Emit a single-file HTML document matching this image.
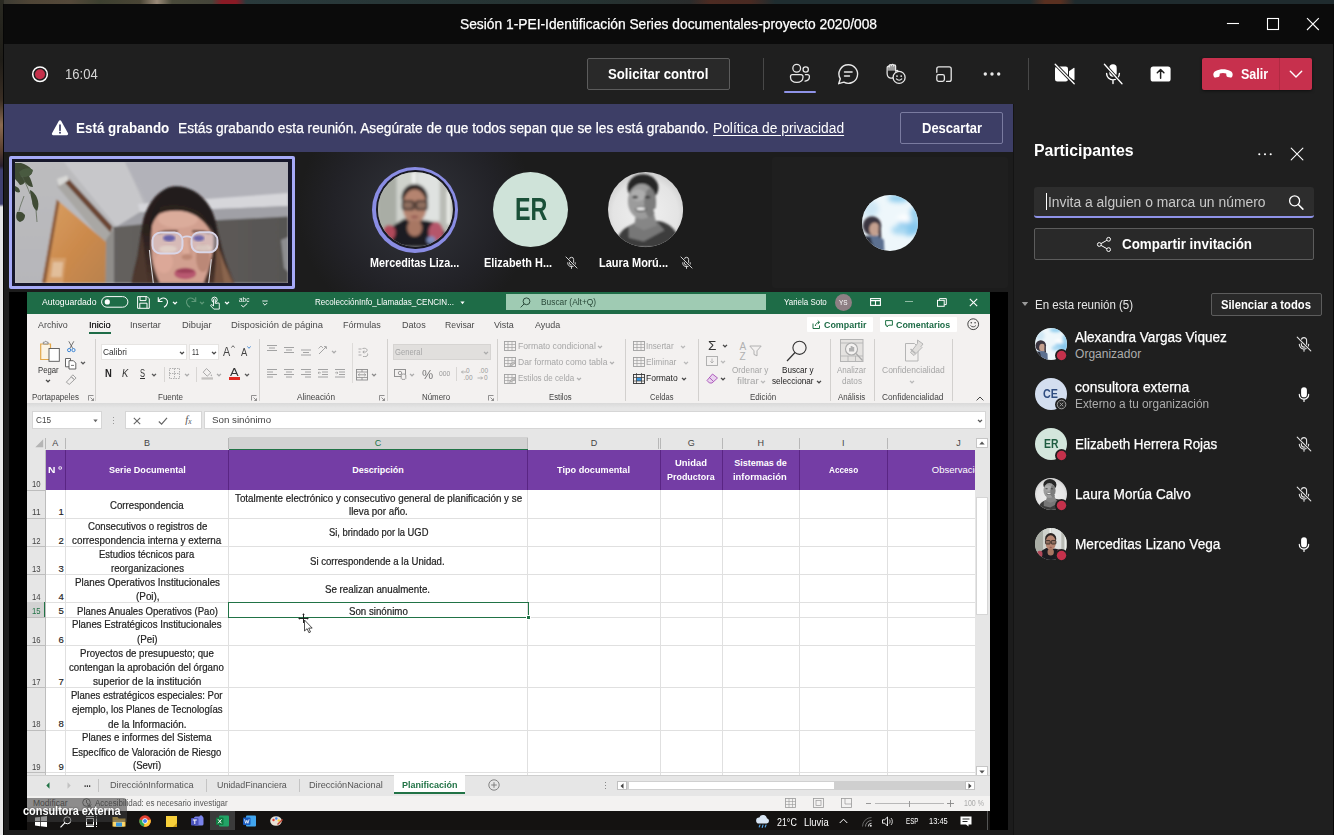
<!DOCTYPE html><html lang="es"><head><meta charset="utf-8"><title>Sesión 1-PEI</title>
<style>html,body{margin:0;padding:0;background:#1f1f1f;}body{width:1334px;height:835px;position:relative;overflow:hidden;font-family:"Liberation Sans",Arial,sans-serif;-webkit-font-smoothing:antialiased;}div,svg{box-sizing:content-box;}svg{overflow:visible;display:block;}</style></head><body>
<div style="position:absolute;left:0px;top:0px;width:1334px;height:5px;background:linear-gradient(90deg,#3a3a33 0,#4f4536 30px,#55493a 70px,#3d4030 100px,#4a4535 140px,#9a8a78 157px,#4a4a3a 172px,#45453a 212px,#8a1a25 222px,#8a1a25 236px,#2a3a3c 246px,#253231 600px,#2a2c2c 690px,#4d2b22 710px,#4a2a22 750px,#1f2d30 775px,#1f2d30 1030px,#5a3020 1045px,#5a3020 1060px,#1f2b2e 1075px,#1f2b2e 100%);"></div>
<div style="position:absolute;left:0px;top:0px;width:4px;height:835px;background:linear-gradient(180deg,#2a2a22 0,#1f1d18 60px,#3a2e24 100px,#8a6a50 125px,#5a4030 150px,#2a2030 166px,#3f4070 170px,#3f4070 204px,#e6e6e6 207px,#e9e9e9 100%);"></div>
<div style="position:absolute;left:3px;top:4px;width:1331px;height:831px;background:#1f1f1f;"></div>
<div style="position:absolute;left:3px;top:4px;width:1331px;height:40px;background:#0b0b0b;"></div>
<div style="position:absolute;top:15.00px;height:18px;line-height:18px;font-size:14px;color:#ffffff;white-space:nowrap;left:460.00px;transform-origin:0 50%;transform:scaleX(0.9850);-webkit-text-stroke:.25px #fff;">Sesión 1-PEI-Identificación Series documentales-proyecto 2020/008</div>
<svg style="position:absolute;left:1223px;top:14px;" width="100" height="20" viewBox="0 0 100 20"><path d="M3.900 9.500h12.100" stroke="#fff" stroke-width="1.100" fill="none"/><rect x="44.500" y="4.500" width="11" height="11" stroke="#fff" stroke-width="1.100" fill="none"/><path d="M84 4.200l11.800 11.800M95.800 4.200L84 16" stroke="#fff" stroke-width="1.100" fill="none"/></svg>
<div style="position:absolute;left:3px;top:44px;width:1331px;height:60px;background:#1f1f1f;"></div>
<svg style="position:absolute;left:30px;top:65px;" width="20" height="20" viewBox="0 0 20 20"><circle cx="10" cy="9.2" r="7.3" fill="none" stroke="#fff" stroke-width="1.5"/><circle cx="10" cy="9.2" r="5" fill="#c4314b"/></svg>
<div style="position:absolute;top:65.00px;height:18px;line-height:18px;font-size:14px;color:#d6d6d6;white-space:nowrap;left:64.50px;transform-origin:0 50%;transform:scaleX(0.9334);">16:04</div>
<div style="position:absolute;left:587px;top:58px;width:143px;height:32px;background:#292929;box-sizing:border-box;border:1px solid #5c5c5c;border-radius:2px;"></div>
<div style="position:absolute;top:65.00px;height:18px;line-height:18px;font-size:14px;color:#fff;white-space:nowrap;font-weight:700;left:608.40px;transform-origin:0 50%;transform:scaleX(0.9411);">Solicitar control</div>
<div style="position:absolute;left:763px;top:58px;width:1px;height:32px;background:#484848;"></div>
<div style="position:absolute;left:1028px;top:58px;width:1px;height:32px;background:#484848;"></div>
<div style="position:absolute;left:784px;top:90.5px;width:32px;height:2.5px;background:#8f93e8;border-radius:1px;"></div>
<svg style="position:absolute;left:788px;top:62px;" width="24" height="24" viewBox="788 62 24 24"><circle cx="796.700" cy="68.300" r="3.850" fill="none" stroke="#e8e8e8" stroke-width="1.300"/><circle cx="805.700" cy="69.500" r="2.650" fill="none" stroke="#e8e8e8" stroke-width="1.300"/><path d="M792.400 74.700h8.700a1.900 1.900 0 0 1 1.900 1.900v.6c0 3-2.500 5.100-6.250 5.100s-6.250-2.100-6.250-5.100v-.6a1.900 1.900 0 0 1 1.900-1.900z" fill="none" stroke="#e8e8e8" stroke-width="1.300"/><path d="M805.400 74.700h2.100a1.900 1.900 0 0 1 1.900 1.900v.2c0 2.300-1.700 4.100-4.400 4.300" fill="none" stroke="#e8e8e8" stroke-width="1.300" stroke-linecap="round"/></svg>
<svg style="position:absolute;left:836px;top:62px;" width="24" height="24" viewBox="0 0 24 24"><path d="M12.400 2.700a9.300 9.300 0 1 1-4.500 17.500l-5.200 1.500 1.600-4.900a9.300 9.300 0 0 1 8.100-14.100z" fill="none" stroke="#e8e8e8" stroke-width="1.400" stroke-linejoin="round"/><path d="M8.500 10h7.600M8.500 14h5" stroke="#e8e8e8" stroke-width="1.400" stroke-linecap="round"/></svg>
<svg style="position:absolute;left:884px;top:62px;" width="24" height="24" viewBox="884 62 24 24"><path d="M888 65.300h7.200v5.400h-7.200z" fill="#e8e8e8" fill-opacity=".62"/><path d="M887.200 67.400a1.100 1.100 0 0 1 2.100-.4v-1.300a1.050 1.050 0 0 1 2.100 0v-.4a1.050 1.050 0 0 1 2.100 0v.7a1.050 1.050 0 0 1 2.100 0v5.200l1.100-.7c.9-.4 1.700.6 1.100 1.400l-4.300 5.300c-1.600 1.500-4.200 1.300-5.500-.5-.7-1-.9-2.300-.9-3.800z" fill="none" stroke="#e8e8e8" stroke-width="1.250" stroke-linejoin="round"/><circle cx="899.100" cy="77.400" r="6" fill="#1f1f1f" stroke="#e8e8e8" stroke-width="1.300"/><circle cx="897" cy="76.100" r=".9" fill="#e8e8e8"/><circle cx="901.200" cy="76.100" r=".9" fill="#e8e8e8"/><path d="M896.400 78.900c1.300 1.700 4.100 1.700 5.400 0" fill="none" stroke="#e8e8e8" stroke-width="1.100" stroke-linecap="round"/></svg>
<svg style="position:absolute;left:932px;top:62px;" width="24" height="24" viewBox="932 62 24 24"><path d="M936.800 72.300v-3.500a2 2 0 0 1 2-2h10.400a2 2 0 0 1 2 2v10.600a2 2 0 0 1-2 2h-2.600" fill="none" stroke="#e8e8e8" stroke-width="1.300" stroke-linecap="round"/><rect x="936.800" y="74.700" width="7.600" height="6.700" rx="1.800" fill="none" stroke="#e8e8e8" stroke-width="1.300"/></svg>
<svg style="position:absolute;left:980px;top:62px;" width="24" height="24" viewBox="0 0 24 24"><circle cx="5.300" cy="12" r="1.700" fill="#e8e8e8"/><circle cx="12" cy="12" r="1.700" fill="#e8e8e8"/><circle cx="18.700" cy="12" r="1.700" fill="#e8e8e8"/></svg>
<svg style="position:absolute;left:1052px;top:62px;" width="24" height="24" viewBox="0 0 24 24"><path d="M3 6.800a2.300 2.300 0 0 1 2.300-2.300h8.400a2.300 2.300 0 0 1 2.300 2.300v10.400a2.300 2.300 0 0 1-2.300 2.300h-8.400a2.300 2.300 0 0 1-2.300-2.300z" fill="#fff"/><path d="M17 9.200l4.600-3.200a.6.600 0 0 1 .9.500v11a.6.600 0 0 1-.9.500l-4.600-3.200z" fill="#fff"/><path d="M3.200 2.200l19 19.600" stroke="#1f1f1f" stroke-width="3.200"/><path d="M3.200 2.200l19 19.600" stroke="#fff" stroke-width="1.300" stroke-linecap="round"/></svg>
<svg style="position:absolute;left:1100.8px;top:62px;" width="24" height="24" viewBox="0 0 24 24"><rect x="8.300" y="2.200" width="7.400" height="12.600" rx="3.700" fill="#fff"/><path d="M5.600 11.500a6.400 6.400 0 0 0 12.800 0M12 18v3.600" fill="none" stroke="#fff" stroke-width="1.400" stroke-linecap="round"/><path d="M3.400 2.200l17.600 19.600" stroke="#1f1f1f" stroke-width="3.200"/><path d="M3.400 2.200l17.600 19.600" stroke="#fff" stroke-width="1.300" stroke-linecap="round"/></svg>
<svg style="position:absolute;left:1148px;top:62px;" width="24" height="24" viewBox="0 0 24 24"><rect x="2.600" y="4.600" width="20" height="15" rx="2.600" fill="#fff"/><path d="M12.600 16.300v-8M9.300 10.800l3.300-3.300 3.300 3.300" fill="none" stroke="#1f1f1f" stroke-width="1.500" stroke-linecap="round" stroke-linejoin="round"/></svg>
<div style="position:absolute;left:1202px;top:58px;width:110px;height:32px;background:#c7304d;border-radius:2px;box-shadow:0 1px 3px rgba(0,0,0,.5);"></div>
<div style="position:absolute;left:1279px;top:58px;width:1px;height:32px;background:#b02a42;"></div>
<svg style="position:absolute;left:1212px;top:66px;" width="22" height="16" viewBox="0 0 22 16"><path d="M1.500 9.700c-.6-2 .2-3.700 2.200-4.700 4.500-2.200 10.100-2.200 14.600 0 2 1 2.800 2.700 2.200 4.700l-.3.900c-.2.800-1 1.200-1.800 1l-2.800-.7c-.7-.2-1.100-.7-1.200-1.400l-.2-1.900c-2.100-.8-4.300-.8-6.400 0l-.2 1.900c-.1.700-.5 1.200-1.200 1.400l-2.800.7c-.8.200-1.600-.2-1.800-1z" fill="#fff"/></svg>
<div style="position:absolute;top:65.00px;height:18px;line-height:18px;font-size:14px;color:#fff;white-space:nowrap;font-weight:700;left:1240.80px;transform-origin:0 50%;transform:scaleX(0.8962);">Salir</div>
<svg style="position:absolute;left:1288px;top:68px;" width="16" height="12" viewBox="0 0 16 12"><path d="M2.300 3.300l5.700 5.600 5.700-5.600" fill="none" stroke="#fff" stroke-width="1.400" stroke-linecap="round" stroke-linejoin="round"/></svg>
<div style="position:absolute;left:3px;top:104px;width:1010px;height:48px;background:#3d3e66;"></div>
<svg style="position:absolute;left:51px;top:119px;" width="18" height="17" viewBox="0 0 18 17"><path d="M9 1.200c.5 0 .9.300 1.200.7l6.800 12.300c.5.900-.2 2-1.200 2h-13.600c-1 0-1.700-1.100-1.200-2l6.800-12.300c.300-.400.700-.700 1.200-.700z" fill="#fff"/><path d="M9 6v5.300" stroke="#3d3e66" stroke-width="1.700" stroke-linecap="round"/><circle cx="9" cy="13.700" r="1" fill="#3d3e66"/></svg>
<div style="position:absolute;top:119.00px;height:18px;line-height:18px;font-size:14px;color:#fff;white-space:nowrap;font-weight:700;left:76.30px;transform-origin:0 50%;transform:scaleX(0.9594);">Está grabando</div>
<div style="position:absolute;top:119.00px;height:18px;line-height:18px;font-size:14px;color:#fff;white-space:nowrap;left:178.40px;transform-origin:0 50%;transform:scaleX(0.9794);-webkit-text-stroke:.25px #fff;">Estás grabando esta reunión. Asegúrate de que todos sepan que se les está grabando.</div>
<div style="position:absolute;top:119.00px;height:18px;line-height:18px;font-size:14px;color:#fff;white-space:nowrap;left:713.40px;transform-origin:0 50%;transform:scaleX(0.9851);text-decoration:underline;text-underline-offset:2px;">Política de privacidad</div>
<div style="position:absolute;left:900px;top:112px;width:103.3px;height:32px;background:#3d3e66;box-sizing:border-box;border:1px solid #7a7ba0;border-radius:2px;"></div>
<div style="position:absolute;top:119.00px;height:18px;line-height:18px;font-size:14px;color:#fff;white-space:nowrap;font-weight:700;left:921.50px;transform-origin:0 50%;transform:scaleX(0.9288);">Descartar</div>
<div style="position:absolute;left:3px;top:152px;width:1010px;height:683px;background:#1c1c1c;"></div>
<div style="position:absolute;left:296px;top:152px;width:240px;height:140px;background:radial-gradient(circle 118px at 120px 58px, #2e2f36 0%, #2a2b31 35%, #222227 70%, #1c1c1c 100%);"></div>
<div style="position:absolute;left:9px;top:156px;width:285.5px;height:133px;background:#a6aaf7;border-radius:2px;"></div>
<div style="position:absolute;left:12px;top:159px;width:279.5px;height:127px;background:#16172b;"></div>
<svg style="position:absolute;left:15px;top:162px;" width="273" height="121" viewBox="15 162 273 121"><defs><filter id="wb1" x="-5%" y="-5%" width="110%" height="110%"><feGaussianBlur stdDeviation="0.9"/></filter><filter id="wb2" x="-10%" y="-10%" width="120%" height="120%"><feGaussianBlur stdDeviation="1.8"/></filter><filter id="wb3" x="-10%" y="-10%" width="120%" height="120%"><feGaussianBlur stdDeviation="0.5"/></filter><linearGradient id="wgw" x1="0" y1="0" x2="0" y2="1"><stop offset="0" stop-color="#bcbcbe"/><stop offset="1" stop-color="#b6b6ba"/></linearGradient><linearGradient id="wgc" x1="0" y1="0" x2="1" y2="0"><stop offset="0" stop-color="#c8c8ca"/><stop offset=".5" stop-color="#b8b8bd"/><stop offset="1" stop-color="#aaaab2"/></linearGradient><linearGradient id="wgo" x1="0" y1="0" x2="1" y2="1"><stop offset="0" stop-color="#d9a064"/><stop offset=".55" stop-color="#cc8a4c"/><stop offset="1" stop-color="#b9824f"/></linearGradient><linearGradient id="wgd" x1="0" y1="0" x2="1" y2="0"><stop offset="0" stop-color="#64615e"/><stop offset="1" stop-color="#575553"/></linearGradient><linearGradient id="wgh" x1="0" y1="0" x2="0" y2="1"><stop offset="0" stop-color="#231a1a"/><stop offset=".55" stop-color="#2e2220"/><stop offset="1" stop-color="#4a342b"/></linearGradient><clipPath id="wclip"><rect x="15" y="162" width="273" height="121"/></clipPath></defs><g clip-path="url(#wclip)"><rect x="15" y="162" width="273" height="121" fill="url(#wgc)"/><g filter="url(#wb1)"><path d="M15 162H64L116 226V283H15Z" fill="url(#wgw)"/><path d="M64 162H125L152 222L116 226Z" fill="#c7c7ca"/><path d="M125 162H288V196L148 206Z" fill="#b2b2b9"/><path d="M138 204L288 193V206L140 212Z" fill="#d6d6da"/><path d="M140 212L288 206V217L150 224L116 227Z" fill="#a0a0a6"/><path d="M113 227L150 223.500L288 216.500V283H113Z" fill="url(#wgd)"/><path d="M281 240L288 237V272L284 268Z" fill="#8d8d90"/><path d="M57 186L63 180L112 230L107 246Z" fill="#a9a7a4"/><path d="M63 180.500L68 178L112.500 226.500L110.500 232.500Z" fill="#6b4531"/><path d="M57 179L67 175.500L69 180L59 186Z" fill="#d8d8d6"/><path d="M106 240L114 228V283H105Z" fill="#8f8d8a"/><path d="M56.700 199.500L106 242L105.500 283H42Z" fill="url(#wgo)"/><path d="M56.700 199.500L59.500 202L45.500 283H42Z" fill="#8c5d3c"/><path d="M53 262H63L61.500 277H51Z" fill="#efe4d6" opacity=".85"/><path d="M47 283L51 258L66 258L63 283Z" fill="#dcae80" opacity=".6"/></g><g filter="url(#wb3)" fill="#3f4b36"><path d="M15 163h6c4 1 8 3 11 7 1 3-1 5-3 6 2 3 3 7 4 11-3 0-6-2-8-5-1 2-3 3-5 3-2-3-4-5-5-6z"/><path d="M19 172c4-4 10-5 14-2-1 5-6 8-12 7z" fill="#4a5a40"/><path d="M15 186c3 1 5 3 5 6-2 1-4 0-5-1z"/><path d="M30 190c4 2 7 6 8 11 1 4 0 8-1 10-3-2-5-6-5-10-1-4-2-8-2-11z"/><path d="M17 212c3-1 6 0 8 3 0 4-2 6-5 7-3-1-5-4-3-10z"/><path d="M22 176c3 6 6 12 8 18M24 196c-2 6-4 10-5 15M36 210l1 12" fill="none" stroke="#55624c" stroke-width=".7"/></g><g filter="url(#wb1)"><path d="M131.500 283C134 270 137 260 138 254C139.500 244 140.500 236 142 227.500C143 220 144 216 146 212C149 204 154 197 160.500 192C165 188.500 170 186.200 175 186.200C182 186 188 188 193.500 190.800C200 194.500 205.500 200 209.300 206.600C212.500 212 214.800 218 216 223.700C217.500 230 218.500 236 220 241C222 250 224.500 259 227.800 267C229.800 272.500 232 278 234.400 283Z" fill="url(#wgh)"/><path d="M216 236C219 250 223 262 227.800 270C230 275 232 279 234.400 283H214C216 266 216.500 250 216 236Z" fill="#74533f"/><path d="M220 250C223 262 228 274 232 283H224C222 272 221 262 220 250Z" fill="#8a654e"/><path d="M142 232C140 250 137 268 131.500 283H148C146 266 144 250 142 232Z" fill="#4e372e"/><path d="M158 270L206 270L204 283H160Z" fill="#b98573"/><path d="M152 226C153 216 158 210 166 208C176 205.500 190 206 200 211C208 215 213 224 213.300 236C213.500 246 212.500 256 210 264C208 272 205 279 203 283H160C157 277 153.500 268 152 258C150.800 247 151 236 152 226Z" fill="#d2a090"/><ellipse cx="178" cy="219" rx="20" ry="9" fill="#dbac9b"/><ellipse cx="164" cy="262" rx="9" ry="11" fill="#dca898"/><ellipse cx="203" cy="258" rx="7" ry="14" fill="#bb8877"/><ellipse cx="186" cy="246" rx="5" ry="9" fill="#dbaa99"/><path d="M150 232C149 220 152 208 160 199C168 191 182 189 194 193C206 198 214 210 216 226C216.500 230 216 234 214.500 238C212 228 207 219 199 214.500C190 210 176 208.500 166 210C158 212 153 220 150 232Z" fill="#231a1a"/><path d="M160 207C170 203 186 204 198 211C206 216 211 226 213 236C207 222 196 213 182 211C172 210 165 211 158 214Z" fill="#2b201e"/><path d="M158 232.500C164 230 171 229.500 178 230.500V232.500C171 232 164 232.500 158 234.500Z" fill="#5e3f34"/><path d="M192 230.500C198 229.500 204 230 210 232.500V234.500C204 232.500 198 232 192 232.500Z" fill="#5e3f34"/><ellipse cx="187" cy="257" rx="5.500" ry="3" fill="#bd8876"/><path d="M189 240C190 247 191 252 191.500 256" fill="none" stroke="#c39282" stroke-width="1.500"/><ellipse cx="185.200" cy="273.500" rx="11" ry="5.800" fill="#b8586f"/><ellipse cx="185.200" cy="270.800" rx="9.500" ry="2.300" fill="#9c4059"/></g><g filter="url(#wb3)"><rect x="152.500" y="232.500" width="30" height="21" rx="8" fill="#dcd9e6" fill-opacity=".45" stroke="#d9d6e8" stroke-width="2"/><rect x="191.500" y="232.300" width="26" height="20" rx="8" fill="#dcd9e6" fill-opacity=".45" stroke="#d9d6e8" stroke-width="2"/><ellipse cx="168" cy="249" rx="9" ry="3.500" fill="#e8e2d6" fill-opacity=".55" filter="url(#wb1)"/><ellipse cx="204" cy="248" rx="8" ry="3.200" fill="#e8e2d6" fill-opacity=".5" filter="url(#wb1)"/><path d="M182.500 237.500c3-1.500 6-1.500 9 0" fill="none" stroke="#d9d6e8" stroke-width="1.500"/><ellipse cx="169.200" cy="238.200" rx="6" ry="3.300" fill="#4a4aa8" fill-opacity=".8" filter="url(#wb1)"/><ellipse cx="198.800" cy="238.200" rx="5.500" ry="3" fill="#4a4aa8" fill-opacity=".75" filter="url(#wb1)"/><path d="M149.400 250C150.500 262 152.300 274 153.300 283" fill="none" stroke="#d4d4d8" stroke-width="1.100"/><path d="M211.300 259.300C210.500 268 209.500 276 208.700 283" fill="none" stroke="#d4d4d8" stroke-width="1.100"/></g></g></svg>
<div style="position:absolute;left:372.4px;top:166.6px;width:86px;height:86px;background:#8a8de4;border-radius:50%;"></div>
<div style="position:absolute;left:376.2px;top:170.4px;width:78.4px;height:78.4px;background:#1b1b24;border-radius:50%;"></div>
<svg style="position:absolute;left:378.0px;top:172.2px;" width="74.8" height="74.8" viewBox="0 0 74.8 74.8"><defs><clipPath id="smc"><circle cx="37.4" cy="37.4" r="37.4"/></clipPath><filter id="smb" x="-30%" y="-30%" width="160%" height="160%"><feGaussianBlur stdDeviation="1.50"/></filter></defs><g clip-path="url(#smc)"><rect width="74.8" height="74.8" fill="#c4c7c1"/><g filter="url(#smb)"><rect x="0" y="0" width="18.70" height="74.8" fill="#a9ada5"/><rect x="18.70" y="0" width="14.96" height="74.8" fill="#cfd2cc"/><rect x="33.66" y="0" width="4.49" height="44.88" fill="#eef0ee"/><rect x="39.27" y="0" width="23.19" height="48.62" fill="#dfe2e0"/><rect x="61.71" y="0" width="14.96" height="74.8" fill="#b9bcb5"/><rect x="68.82" y="18.70" width="3.74" height="33.66" fill="#eceeea"/><path d="M4.49 74.8C5.61 57.97 16.83 52.36 26.18 46.75L48.62 48.62C59.84 50.49 69.19 56.10 71.06 74.8Z" fill="#1d1c22"/><ellipse cx="11.22" cy="60.59" rx="6.36" ry="7.48" fill="#b0485a"/><ellipse cx="57.97" cy="60.59" rx="7.48" ry="10.47" fill="#b5566a"/><ellipse cx="53.11" cy="68.07" rx="4.49" ry="3.74" fill="#7f8ec0"/><ellipse cx="36.65" cy="25.43" rx="13.09" ry="13.46" fill="#2a2422"/><ellipse cx="36.65" cy="34.41" rx="11.97" ry="17.20" fill="#b58470"/><ellipse cx="36.65" cy="56.10" rx="7.48" ry="8.23" fill="#a87764"/><rect x="24.68" y="29.17" width="10.85" height="8.23" rx="1.87" fill="#8f6e5e" stroke="#2e2622" stroke-width="1.87"/><rect x="38.15" y="29.17" width="10.85" height="8.23" rx="1.87" fill="#8f6e5e" stroke="#2e2622" stroke-width="1.87"/><ellipse cx="36.65" cy="44.88" rx="3.74" ry="1.12" fill="#8c4a48"/></g></g></svg>
<div style="position:absolute;top:255.20px;height:16px;line-height:16px;font-size:12px;color:#fff;white-space:nowrap;font-weight:700;left:370.00px;transform-origin:0 50%;transform:scaleX(0.8977);">Merceditas Liza...</div>
<div style="position:absolute;left:493px;top:172px;width:75px;height:75px;background:#cfe3d9;border-radius:50%;"></div>
<div style="position:absolute;top:189.50px;height:40px;line-height:40px;font-size:31px;color:#1a5038;white-space:nowrap;font-weight:700;left:515.10px;transform-origin:0 50%;transform:scaleX(0.7523);">ER</div>
<div style="position:absolute;top:255.20px;height:16px;line-height:16px;font-size:12px;color:#fff;white-space:nowrap;font-weight:700;left:484.00px;transform-origin:0 50%;transform:scaleX(0.9106);">Elizabeth H...</div>
<svg style="position:absolute;left:565px;top:256.2px;" width="13" height="13" viewBox="0 0 16 16"><path d="M8 1.600a2.600 2.600 0 0 1 2.600 2.600v4.300a2.600 2.600 0 0 1-5.200 0v-4.300a2.600 2.600 0 0 1 2.600-2.600z" fill="none" stroke="#e6e6e6" stroke-width="1.100"/><path d="M3.300 8.300a4.700 4.700 0 0 0 9.400 0M8 13v2.300" fill="none" stroke="#e6e6e6" stroke-width="1.100" stroke-linecap="round"/><path d="M1.200 1.200l13.600 13.600" stroke="#1c1c1c" stroke-width="2.600"/><path d="M1.200 1.200l13.600 13.600" stroke="#e6e6e6" stroke-width="1.100" stroke-linecap="round"/></svg>
<svg style="position:absolute;left:607.8px;top:171.70000000000002px;" width="75.2" height="75.2" viewBox="0 0 75.2 75.2"><defs><clipPath id="slc"><circle cx="37.6" cy="37.6" r="37.6"/></clipPath><radialGradient id="slg" cx=".5" cy=".55" r=".62"><stop offset="0" stop-color="#f0f0f0"/><stop offset=".7" stop-color="#e4e4e4"/><stop offset="1" stop-color="#c4c4c4"/></radialGradient><filter id="slb" x="-30%" y="-30%" width="160%" height="160%"><feGaussianBlur stdDeviation="1.32"/></filter></defs><g clip-path="url(#slc)"><rect width="75.2" height="75.2" fill="url(#slg)"/><g filter="url(#slb)"><path d="M7.52 75.2C9.40 58.28 18.80 53.39 30.08 51.14L47.00 48.88C60.16 49.63 69.56 56.40 73.32 75.2Z" fill="#3e3e3e"/><path d="M20.68 54.52L30.08 48.88L48.13 48.88L56.40 58.28L35.72 69.56L20.68 65.80Z" fill="#777"/><path d="M28.20 41.36H45.87L48.88 53.39L35.72 58.28L26.32 53.39Z" fill="#868686"/><ellipse cx="34.97" cy="15.79" rx="15.42" ry="13.54" fill="#262626"/><ellipse cx="33.84" cy="29.33" rx="13.91" ry="17.67" fill="#9c9c9c"/><ellipse cx="42.11" cy="30.83" rx="6.02" ry="14.29" fill="#7c7c7c"/><ellipse cx="30.08" cy="23.31" rx="7.52" ry="6.02" fill="#adadad"/><ellipse cx="27.07" cy="25.19" rx="3.01" ry="1.32" fill="#3c3c3c"/><ellipse cx="39.48" cy="25.19" rx="3.01" ry="1.32" fill="#3c3c3c"/><ellipse cx="32.71" cy="37.22" rx="5.64" ry="2.82" fill="#555"/><ellipse cx="32.71" cy="36.85" rx="4.51" ry="1.50" fill="#f4f4f4"/><circle cx="47.00" cy="38.35" r="1.32" fill="#f4f4f4"/></g></g></svg>
<div style="position:absolute;top:255.20px;height:16px;line-height:16px;font-size:12px;color:#fff;white-space:nowrap;font-weight:700;left:599.30px;transform-origin:0 50%;transform:scaleX(0.9158);">Laura Morú...</div>
<svg style="position:absolute;left:680px;top:256.2px;" width="13" height="13" viewBox="0 0 16 16"><path d="M8 1.600a2.600 2.600 0 0 1 2.600 2.600v4.300a2.600 2.600 0 0 1-5.200 0v-4.300a2.600 2.600 0 0 1 2.600-2.600z" fill="none" stroke="#e6e6e6" stroke-width="1.100"/><path d="M3.300 8.300a4.700 4.700 0 0 0 9.400 0M8 13v2.300" fill="none" stroke="#e6e6e6" stroke-width="1.100" stroke-linecap="round"/><path d="M1.200 1.200l13.600 13.600" stroke="#1c1c1c" stroke-width="2.600"/><path d="M1.200 1.200l13.600 13.600" stroke="#e6e6e6" stroke-width="1.100" stroke-linecap="round"/></svg>
<div style="position:absolute;left:772px;top:157px;width:236px;height:131px;background:#1f1f1f;border-radius:3px;"></div>
<svg style="position:absolute;left:861.9px;top:194.6px;" width="56" height="56" viewBox="0 0 56 56"><defs><clipPath id="ssc"><circle cx="28" cy="28" r="28"/></clipPath><filter id="ssb" x="-30%" y="-30%" width="160%" height="160%"><feGaussianBlur stdDeviation="2.52"/></filter><filter id="ssb2" x="-30%" y="-30%" width="160%" height="160%"><feGaussianBlur stdDeviation="1.26"/></filter></defs><g clip-path="url(#ssc)"><rect width="56" height="56" fill="#eef7fb"/><g filter="url(#ssb)"><ellipse cx="36.40" cy="3.36" rx="10.64" ry="3.92" fill="#8fcdee"/><ellipse cx="8.40" cy="14.00" rx="8.40" ry="8.40" fill="#cfe7f4"/><ellipse cx="47.60" cy="31.36" rx="11.76" ry="9.52" fill="#86c8ee"/><ellipse cx="37.80" cy="35.00" rx="8.40" ry="4.48" fill="#a8d8f2"/><ellipse cx="43.40" cy="23.80" rx="8.40" ry="3.92" fill="#ffffff"/><ellipse cx="53.20" cy="19.60" rx="5.60" ry="8.40" fill="#9ad2f0"/></g><g filter="url(#ssb2)"><path d="M0.56 42.00L14.00 39.76L21.84 44.80L22.40 56L0 56Z" fill="#5b6f90"/><path d="M0 40.60L8.40 42.00L12.60 56L0 56Z" fill="#2c2f3a"/><ellipse cx="10.08" cy="30.80" rx="9.24" ry="9.52" fill="#3b3540"/><ellipse cx="12.60" cy="34.16" rx="5.32" ry="6.72" fill="#c4a08f"/><path d="M16.80 28.00C20.16 33.60 18.48 39.20 19.60 43.40L16.24 42.00Z" fill="#3b3540"/></g></g></svg>
<div style="position:absolute;left:9px;top:292px;width:999px;height:537.7px;background:#000;"></div>
<div style="position:absolute;left:27px;top:292px;width:963px;height:21.5px;background:#1e6c47;"></div>
<div style="position:absolute;top:296.30px;height:12px;line-height:12px;font-size:9px;color:#fff;white-space:nowrap;left:42.00px;transform-origin:0 50%;transform:scaleX(0.9637);">Autoguardado</div>
<svg style="position:absolute;left:101px;top:295.5px;" width="28" height="12" viewBox="0 0 28 12"><rect x=".6" y=".6" width="26.300" height="10.600" rx="5.300" fill="none" stroke="#fff" stroke-width="1"/><circle cx="6.300" cy="5.900" r="2.600" fill="#fff"/></svg>
<svg style="position:absolute;left:137px;top:296px;" width="13" height="13" viewBox="0 0 13 13"><path d="M.6 .6h9.500l2.200 2.200v9.500h-11.700z" fill="none" stroke="#fff" stroke-width="1"/><path d="M3 .8v3.800h6v-3.800M2.800 12v-4.800h7.200v4.800" fill="none" stroke="#fff" stroke-width="1"/></svg>
<svg style="position:absolute;left:157px;top:296px;" width="12" height="12" viewBox="0 0 12 12"><path d="M1.300 1.300v4.200h4.200" fill="none" stroke="#fff" stroke-width="1.100"/><path d="M1.600 5.200c1.500-3 5-4 7.300-2.300 2.600 2 2.200 5.600-1.900 8.300" fill="none" stroke="#fff" stroke-width="1.100"/></svg>
<svg style="position:absolute;left:172px;top:300.5px;" width="6" height="4" viewBox="0 0 6 4"><path d="M1 .9l2 1.900 2-1.900" fill="none" stroke="#fff" stroke-width="1.250"/></svg>
<svg style="position:absolute;left:185px;top:296px;" width="12" height="12" viewBox="0 0 12 12"><path d="M10.700 1.300v4.200h-4.200" fill="none" stroke="#5f9a7a" stroke-width="1.100"/><path d="M10.400 5.200c-1.500-3-5-4-7.300-2.300-2.600 2-2.200 5.600 1.900 8.300" fill="none" stroke="#5f9a7a" stroke-width="1.100"/></svg>
<svg style="position:absolute;left:198.5px;top:300.5px;" width="6" height="4" viewBox="0 0 6 4"><path d="M1 .9l2 1.900 2-1.900" fill="none" stroke="#5f9a7a" stroke-width="1.250"/></svg>
<svg style="position:absolute;left:210px;top:295.5px;" width="11" height="14" viewBox="0 0 11 14"><circle cx="4.500" cy="3.800" r="2.700" fill="none" stroke="#fff" stroke-width="1"/><path d="M3.500 3.500v6.500l-1.500-1.200c-1-.5-1.800.5-1 1.300l2.800 3h5.500v-5.600c0-.9-1.300-.9-1.300 0 0-.9-1.400-.9-1.400 0 0-.9-1.300-.9-1.300 0v-4c0-1-1.800-1-1.800 0z" fill="#1e6c47" stroke="#fff" stroke-width=".9"/></svg>
<svg style="position:absolute;left:224px;top:300.5px;" width="6" height="4" viewBox="0 0 6 4"><path d="M1 .9l2 1.900 2-1.900" fill="none" stroke="#fff" stroke-width="1.250"/></svg>
<div style="position:absolute;top:295.10px;height:9px;line-height:9px;font-size:7px;color:#fff;white-space:nowrap;left:239.00px;transform-origin:0 50%;transform:scaleX(0.9215);">abc</div>
<svg style="position:absolute;left:240px;top:303px;" width="9" height="5" viewBox="0 0 9 5"><path d="M1.300 2l2 2 4-3.600" fill="none" stroke="#fff" stroke-width="1"/></svg>
<svg style="position:absolute;left:262px;top:299.5px;" width="6" height="6" viewBox="0 0 6 6"><path d="M.3 1h5.400" stroke="#fff" stroke-width=".9"/><path d="M.8 3l2.200 2.200 2.200-2.200" fill="none" stroke="#fff" stroke-width=".9"/></svg>
<div style="position:absolute;top:296.30px;height:12px;line-height:12px;font-size:9px;color:#fff;white-space:nowrap;left:315.10px;transform-origin:0 50%;transform:scaleX(0.8957);">RecolecciónInfo_Llamadas_CENCIN...</div>
<svg style="position:absolute;left:459.5px;top:301px;" width="5" height="4" viewBox="0 0 5 4"><path d="M.4 .6h4.200l-2.100 2.600z" fill="#fff"/></svg>
<div style="position:absolute;left:506px;top:293.5px;width:259.5px;height:16.5px;background:#9fcbb3;"></div>
<svg style="position:absolute;left:519.5px;top:296.5px;" width="11" height="11" viewBox="0 0 11 11"><circle cx="6.500" cy="4.300" r="3.400" fill="none" stroke="#2a4a3a" stroke-width="1"/><path d="M4.200 6.800l-3.500 3.600" stroke="#2a4a3a" stroke-width="1"/></svg>
<div style="position:absolute;top:296.30px;height:12px;line-height:12px;font-size:9px;color:#294838;white-space:nowrap;left:541.10px;transform-origin:0 50%;transform:scaleX(0.9297);">Buscar (Alt+Q)</div>
<div style="position:absolute;top:296.30px;height:12px;line-height:12px;font-size:9px;color:#fff;white-space:nowrap;left:783.90px;transform-origin:0 50%;transform:scaleX(0.8850);">Yariela Soto</div>
<div style="position:absolute;left:834.5px;top:294px;width:17px;height:17px;background:#8e7f84;border-radius:50%;"></div>
<div style="position:absolute;top:298.20px;height:9px;line-height:9px;font-size:7px;color:#fff;white-space:nowrap;left:838.90px;transform-origin:0 50%;transform:scaleX(0.9209);">YS</div>
<svg style="position:absolute;left:870px;top:298px;" width="11" height="8" viewBox="0 0 11 8"><rect x=".6" y=".6" width="9.800" height="6.800" fill="none" stroke="#fff" stroke-width="1.100"/><path d="M.6 2.600h9.800M5.500 2.600v4.800" stroke="#fff" stroke-width="1.100"/></svg>
<div style="position:absolute;left:904.5px;top:300.5px;width:8px;height:1px;background:#8fbaa3;"></div>
<svg style="position:absolute;left:936.5px;top:297.5px;" width="10" height="9" viewBox="0 0 10 9"><rect x=".5" y="2.300" width="6.700" height="6" fill="none" stroke="#fff" stroke-width="1"/><path d="M2.500 2.300v-1.700h6.800v6h-2" fill="none" stroke="#fff" stroke-width="1"/></svg>
<svg style="position:absolute;left:969px;top:297.5px;" width="9" height="9" viewBox="0 0 9 9"><path d="M.8 .8l7.400 7.400M8.200 .8L.8 8.200" stroke="#fff" stroke-width="1.100"/></svg>
<div style="position:absolute;left:27px;top:313.5px;width:963px;height:89px;background:#f3f1f0;"></div>
<div style="position:absolute;top:318.60px;height:12px;line-height:12px;font-size:9.5px;color:#4a4a4a;white-space:nowrap;left:37.50px;transform-origin:0 50%;transform:scaleX(0.9375);">Archivo</div>
<div style="position:absolute;top:318.60px;height:12px;line-height:12px;font-size:9.5px;color:#222;white-space:nowrap;left:88.60px;transform-origin:0 50%;transform:scaleX(0.9830);text-shadow:0 0 .4px #222;">Inicio</div>
<div style="position:absolute;top:318.60px;height:12px;line-height:12px;font-size:9.5px;color:#4a4a4a;white-space:nowrap;left:130.20px;transform-origin:0 50%;transform:scaleX(0.9563);">Insertar</div>
<div style="position:absolute;top:318.60px;height:12px;line-height:12px;font-size:9.5px;color:#4a4a4a;white-space:nowrap;left:181.50px;transform-origin:0 50%;transform:scaleX(0.9802);">Dibujar</div>
<div style="position:absolute;top:318.60px;height:12px;line-height:12px;font-size:9.5px;color:#4a4a4a;white-space:nowrap;left:231.40px;transform-origin:0 50%;transform:scaleX(0.9898);">Disposición de página</div>
<div style="position:absolute;top:318.60px;height:12px;line-height:12px;font-size:9.5px;color:#4a4a4a;white-space:nowrap;left:343.20px;transform-origin:0 50%;transform:scaleX(0.9547);">Fórmulas</div>
<div style="position:absolute;top:318.60px;height:12px;line-height:12px;font-size:9.5px;color:#4a4a4a;white-space:nowrap;left:401.50px;transform-origin:0 50%;transform:scaleX(0.9550);">Datos</div>
<div style="position:absolute;top:318.60px;height:12px;line-height:12px;font-size:9.5px;color:#4a4a4a;white-space:nowrap;left:445.40px;transform-origin:0 50%;transform:scaleX(0.9161);">Revisar</div>
<div style="position:absolute;top:318.60px;height:12px;line-height:12px;font-size:9.5px;color:#4a4a4a;white-space:nowrap;left:494.30px;transform-origin:0 50%;transform:scaleX(0.9452);">Vista</div>
<div style="position:absolute;top:318.60px;height:12px;line-height:12px;font-size:9.5px;color:#4a4a4a;white-space:nowrap;left:534.60px;transform-origin:0 50%;transform:scaleX(0.9415);">Ayuda</div>
<div style="position:absolute;left:88.5px;top:332px;width:22px;height:2px;background:#1e6c47;"></div>
<div style="position:absolute;left:807px;top:317px;width:65.5px;height:15px;background:#fff;border-radius:1px;"></div>
<svg style="position:absolute;left:811.5px;top:319.5px;" width="9" height="9" viewBox="0 0 9 9"><path d="M1 3.500v5h6.500v-3" fill="none" stroke="#217346" stroke-width="1"/><path d="M3.300 6c.3-2.300 1.800-3.600 4-3.700M5.800 .6l1.800 1.700-1.800 1.700" fill="none" stroke="#217346" stroke-width="1"/></svg>
<div style="position:absolute;top:318.60px;height:12px;line-height:12px;font-size:9.5px;color:#1e6c47;white-space:nowrap;font-weight:700;left:823.80px;transform-origin:0 50%;transform:scaleX(0.9362);">Compartir</div>
<div style="position:absolute;left:879.5px;top:317px;width:77px;height:15px;background:#fff;border-radius:1px;"></div>
<svg style="position:absolute;left:885px;top:320px;" width="8" height="8" viewBox="0 0 8 8"><path d="M.6 .6h6.800v4.600h-3.600l-1.800 1.800v-1.800h-1.400z" fill="none" stroke="#217346" stroke-width="1"/></svg>
<div style="position:absolute;top:318.60px;height:12px;line-height:12px;font-size:9.5px;color:#1e6c47;white-space:nowrap;font-weight:700;left:895.90px;transform-origin:0 50%;transform:scaleX(0.9334);">Comentarios</div>
<svg style="position:absolute;left:967px;top:318px;" width="12.5" height="12.5" viewBox="0 0 12.5 12.5"><circle cx="6.200" cy="6.200" r="5.400" fill="none" stroke="#444" stroke-width="1"/><circle cx="4.300" cy="4.800" r=".8" fill="#444"/><circle cx="8.100" cy="4.800" r=".8" fill="#444"/><path d="M3.500 7.500c1.300 1.800 4.100 1.800 5.400 0" fill="none" stroke="#444" stroke-width=".9"/></svg>
<div style="position:absolute;left:95px;top:338.5px;width:1px;height:62px;background:#d2d0ce;"></div>
<div style="position:absolute;left:258.5px;top:338.5px;width:1px;height:62px;background:#d2d0ce;"></div>
<div style="position:absolute;left:386.5px;top:338.5px;width:1px;height:62px;background:#d2d0ce;"></div>
<div style="position:absolute;left:496.5px;top:338.5px;width:1px;height:62px;background:#d2d0ce;"></div>
<div style="position:absolute;left:625px;top:338.5px;width:1px;height:62px;background:#d2d0ce;"></div>
<div style="position:absolute;left:698.3px;top:338.5px;width:1px;height:62px;background:#d2d0ce;"></div>
<div style="position:absolute;left:829.5px;top:338.5px;width:1px;height:62px;background:#d2d0ce;"></div>
<div style="position:absolute;left:873.5px;top:338.5px;width:1px;height:62px;background:#d2d0ce;"></div>
<div style="position:absolute;left:951.5px;top:338.5px;width:1px;height:62px;background:#d2d0ce;"></div>
<div style="position:absolute;left:163.5px;top:366.5px;width:1px;height:15px;background:#d8d6d4;"></div>
<div style="position:absolute;left:196px;top:366.5px;width:1px;height:15px;background:#d8d6d4;"></div>
<div style="position:absolute;left:351.5px;top:343px;width:1px;height:40px;background:#dddbd9;"></div>
<div style="position:absolute;left:455.5px;top:367px;width:1px;height:14px;background:#d8d6d4;"></div>
<div style="position:absolute;top:391.50px;height:11px;line-height:11px;font-size:8.5px;color:#444;white-space:nowrap;left:31.60px;transform-origin:0 50%;transform:scaleX(0.9363);">Portapapeles</div>
<div style="position:absolute;top:391.50px;height:11px;line-height:11px;font-size:8.5px;color:#444;white-space:nowrap;left:157.70px;transform-origin:0 50%;transform:scaleX(0.9447);">Fuente</div>
<div style="position:absolute;top:391.50px;height:11px;line-height:11px;font-size:8.5px;color:#444;white-space:nowrap;left:297.20px;transform-origin:0 50%;transform:scaleX(0.9688);">Alineación</div>
<div style="position:absolute;top:391.50px;height:11px;line-height:11px;font-size:8.5px;color:#444;white-space:nowrap;left:421.80px;transform-origin:0 50%;transform:scaleX(0.9295);">Número</div>
<div style="position:absolute;top:391.50px;height:11px;line-height:11px;font-size:8.5px;color:#444;white-space:nowrap;left:548.80px;transform-origin:0 50%;transform:scaleX(0.9067);">Estilos</div>
<div style="position:absolute;top:391.50px;height:11px;line-height:11px;font-size:8.5px;color:#444;white-space:nowrap;left:649.60px;transform-origin:0 50%;transform:scaleX(0.8844);">Celdas</div>
<div style="position:absolute;top:391.50px;height:11px;line-height:11px;font-size:8.5px;color:#444;white-space:nowrap;left:750.30px;transform-origin:0 50%;transform:scaleX(0.9398);">Edición</div>
<div style="position:absolute;top:391.50px;height:11px;line-height:11px;font-size:8.5px;color:#444;white-space:nowrap;left:837.50px;transform-origin:0 50%;transform:scaleX(0.9252);">Análisis</div>
<div style="position:absolute;top:391.50px;height:11px;line-height:11px;font-size:8.5px;color:#444;white-space:nowrap;left:881.90px;transform-origin:0 50%;transform:scaleX(0.9769);">Confidencialidad</div>
<svg style="position:absolute;left:87.5px;top:394.5px;" width="6" height="6" viewBox="0 0 6 6"><path d="M.5 5.500v-5h5M2.500 2.500l3 3M5.500 3.300v2.200h-2.200" fill="none" stroke="#777" stroke-width=".8"/></svg>
<svg style="position:absolute;left:250.5px;top:394.5px;" width="6" height="6" viewBox="0 0 6 6"><path d="M.5 5.500v-5h5M2.500 2.500l3 3M5.500 3.300v2.200h-2.200" fill="none" stroke="#777" stroke-width=".8"/></svg>
<svg style="position:absolute;left:378.7px;top:394.5px;" width="6" height="6" viewBox="0 0 6 6"><path d="M.5 5.500v-5h5M2.500 2.500l3 3M5.500 3.300v2.200h-2.200" fill="none" stroke="#777" stroke-width=".8"/></svg>
<svg style="position:absolute;left:488.3px;top:394.5px;" width="6" height="6" viewBox="0 0 6 6"><path d="M.5 5.500v-5h5M2.500 2.500l3 3M5.500 3.300v2.200h-2.200" fill="none" stroke="#777" stroke-width=".8"/></svg>
<svg style="position:absolute;left:976px;top:396px;" width="8" height="5" viewBox="0 0 8 5"><path d="M.6 4.400l3.400-3.400 3.400 3.400" fill="none" stroke="#444" stroke-width="1"/></svg>
<svg style="position:absolute;left:39.5px;top:341px;" width="20" height="21" viewBox="0 0 20 21"><path d="M.7 3h9.800v15.500h-9.800z" fill="#fbf3e4" stroke="#e3a84a" stroke-width="1.200"/><path d="M3.300 3v-1.800h1.300c.2-1.200 2-1.200 2.200 0h1.300v1.800z" fill="#f3f1f0" stroke="#777" stroke-width=".8"/><rect x="9" y="7.500" width="10.300" height="12.800" fill="#fff" stroke="#555" stroke-width=".9"/></svg>
<div style="position:absolute;top:364.30px;height:12px;line-height:12px;font-size:9.5px;color:#333;white-space:nowrap;left:37.80px;transform-origin:0 50%;transform:scaleX(0.8126);">Pegar</div>
<svg style="position:absolute;left:45px;top:379px;" width="6" height="4" viewBox="0 0 6 4"><path d="M1 .9l2 1.900 2-1.900" fill="none" stroke="#444" stroke-width="1.250"/></svg>
<svg style="position:absolute;left:66.5px;top:340.5px;" width="8.5" height="11.5" viewBox="0 0 8.5 11.5"><path d="M1.800 .3l4 7.200M6.800 .3l-4 7.200" stroke="#555" stroke-width=".8"/><circle cx="2.100" cy="9.100" r="1.600" fill="none" stroke="#2b7cd3" stroke-width=".9"/><circle cx="6.500" cy="9.100" r="1.600" fill="none" stroke="#2b7cd3" stroke-width=".9"/></svg>
<svg style="position:absolute;left:65px;top:357.5px;" width="11.5" height="11.5" viewBox="0 0 11.5 11.5"><path d="M.5 .5h5v8.300h-5z" fill="#fff" stroke="#555" stroke-width=".9"/><path d="M4 2.700h4.400l2.400 2.400v5.900h-6.800z" fill="#fff" stroke="#555" stroke-width=".9"/><path d="M6 7.400h3" stroke="#555" stroke-width=".8"/></svg>
<svg style="position:absolute;left:79.8px;top:361px;" width="6" height="4" viewBox="0 0 6 4"><path d="M1 .9l2 1.900 2-1.900" fill="none" stroke="#555" stroke-width="1.250"/></svg>
<svg style="position:absolute;left:65.5px;top:374px;" width="11" height="11" viewBox="0 0 11 11"><path d="M6.800 .8l3.300 3.300-1.800 1.500-3-3z" fill="none" stroke="#9a9a9a" stroke-width=".9"/><path d="M5.300 2.800l3 3-5 4.600-3-2.200z" fill="none" stroke="#9a9a9a" stroke-width=".9"/></svg>
<div style="position:absolute;left:101px;top:344px;width:85.5px;height:15.5px;background:#fff;box-sizing:border-box;border:1px solid #e6e4e2;"></div>
<div style="position:absolute;top:346.00px;height:12px;line-height:12px;font-size:9.5px;color:#333;white-space:nowrap;left:103.00px;transform-origin:0 50%;transform:scaleX(0.8840);">Calibri</div>
<svg style="position:absolute;left:179.3px;top:350.5px;" width="6" height="4" viewBox="0 0 6 4"><path d="M1 .9l2 1.900 2-1.900" fill="none" stroke="#444" stroke-width="1.250"/></svg>
<div style="position:absolute;left:189px;top:344px;width:29.5px;height:15.5px;background:#fff;box-sizing:border-box;border:1px solid #e6e4e2;"></div>
<div style="position:absolute;top:346.00px;height:12px;line-height:12px;font-size:9.5px;color:#333;white-space:nowrap;left:191.50px;transform-origin:0 50%;transform:scaleX(0.6996);">11</div>
<svg style="position:absolute;left:211.3px;top:350.5px;" width="6" height="4" viewBox="0 0 6 4"><path d="M1 .9l2 1.900 2-1.900" fill="none" stroke="#444" stroke-width="1.250"/></svg>
<div style="position:absolute;top:343.50px;height:16px;line-height:16px;font-size:12px;color:#444;white-space:nowrap;left:223.30px;transform-origin:0 50%;transform:scaleX(0.8995);">A</div>
<svg style="position:absolute;left:230.5px;top:345px;" width="4" height="3" viewBox="0 0 4 3"><path d="M.4 2.600l1.600-1.900 1.600 1.900" fill="none" stroke="#444" stroke-width=".8"/></svg>
<div style="position:absolute;top:345.30px;height:14px;line-height:14px;font-size:10.5px;color:#444;white-space:nowrap;left:241.00px;transform-origin:0 50%;transform:scaleX(0.8995);">A</div>
<svg style="position:absolute;left:247.3px;top:345.5px;" width="4" height="3" viewBox="0 0 4 3"><path d="M.4 .4l1.600 1.900 1.600-1.900" fill="none" stroke="#2b7cd3" stroke-width=".8"/></svg>
<div style="position:absolute;top:367.20px;height:13px;line-height:13px;font-size:10px;color:#222;white-space:nowrap;font-weight:700;left:104.70px;transform-origin:0 50%;transform:scaleX(0.9416);">N</div>
<div style="position:absolute;top:367.20px;height:13px;line-height:13px;font-size:10px;color:#333;white-space:nowrap;font-style:italic;left:121.80px;transform-origin:0 50%;transform:scaleX(0.9445);">K</div>
<div style="position:absolute;top:367.00px;height:13px;line-height:13px;font-size:10px;color:#333;white-space:nowrap;left:139.60px;transform-origin:0 50%;transform:scaleX(0.7496);text-decoration:underline;">S</div>
<svg style="position:absolute;left:151.4px;top:372.5px;" width="6" height="4" viewBox="0 0 6 4"><path d="M1 .9l2 1.900 2-1.900" fill="none" stroke="#555" stroke-width="1.250"/></svg>
<svg style="position:absolute;left:169px;top:368px;" width="11" height="11" viewBox="0 0 11 11"><path d="M.5 .5h10v10h-10zM5.500 .5v10M.5 5.500h10" fill="none" stroke="#a8a8a8" stroke-width=".9" stroke-dasharray="1.500 1"/></svg>
<svg style="position:absolute;left:183.8px;top:372.5px;" width="6" height="4" viewBox="0 0 6 4"><path d="M1 .9l2 1.900 2-1.900" fill="none" stroke="#aaa" stroke-width="1.250"/></svg>
<svg style="position:absolute;left:201px;top:367px;" width="12.5" height="13" viewBox="0 0 12.5 13"><path d="M5.500 1.500l4.300 4.300-3.600 3.400-4-4z" fill="none" stroke="#a0a0a0" stroke-width=".9"/><path d="M10.300 7.300c.8 1 .8 1.900 0 2-.8-.1-.8-1 0-2z" fill="#a0a0a0"/><rect x=".5" y="10.300" width="11.500" height="2.300" fill="#c4c2c0"/></svg>
<svg style="position:absolute;left:216.2px;top:372.5px;" width="6" height="4" viewBox="0 0 6 4"><path d="M1 .9l2 1.900 2-1.900" fill="none" stroke="#aaa" stroke-width="1.250"/></svg>
<div style="position:absolute;top:364.80px;height:14px;line-height:14px;font-size:10.5px;color:#333;white-space:nowrap;left:230.20px;transform-origin:0 50%;transform:scaleX(1.2279);">A</div>
<div style="position:absolute;left:229.3px;top:377.2px;width:11px;height:2.6px;background:#e0281f;"></div>
<svg style="position:absolute;left:243.8px;top:372.5px;" width="6" height="4" viewBox="0 0 6 4"><path d="M1 .9l2 1.900 2-1.900" fill="none" stroke="#555" stroke-width="1.250"/></svg>
<svg style="position:absolute;left:267px;top:345px;" width="10" height="10" viewBox="0 0 10 10"><path d="M0 0.5h10" stroke="#9a9a9a" stroke-width=".9"/><path d="M2 3.0h6" stroke="#9a9a9a" stroke-width=".9"/><path d="M0 5.5h10" stroke="#9a9a9a" stroke-width=".9"/></svg>
<svg style="position:absolute;left:284px;top:345px;" width="10" height="10" viewBox="0 0 10 10"><path d="M0 2.5h10" stroke="#9a9a9a" stroke-width=".9"/><path d="M2 5.0h6" stroke="#9a9a9a" stroke-width=".9"/><path d="M0 7.5h10" stroke="#9a9a9a" stroke-width=".9"/></svg>
<svg style="position:absolute;left:301px;top:345px;" width="10" height="10" viewBox="0 0 10 10"><path d="M0 5.0h10" stroke="#9a9a9a" stroke-width=".9"/><path d="M2 7.5h6" stroke="#9a9a9a" stroke-width=".9"/><path d="M0 10.0h10" stroke="#9a9a9a" stroke-width=".9"/></svg>
<svg style="position:absolute;left:318px;top:345px;" width="12" height="10" viewBox="0 0 12 10"><path d="M1 9l7-7M6 1.600h2.400v2.400" fill="none" stroke="#9a9a9a" stroke-width=".9"/><path d="M.5 3.500l2.500-2.500 2 2" fill="none" stroke="#9a9a9a" stroke-width=".8"/></svg>
<svg style="position:absolute;left:331px;top:350px;" width="6" height="4" viewBox="0 0 6 4"><path d="M1 .9l2 1.900 2-1.900" fill="none" stroke="#aaa" stroke-width="1.250"/></svg>
<svg style="position:absolute;left:267px;top:369px;" width="10" height="10" viewBox="0 0 10 10"><path d="M0 0.5h10" stroke="#9a9a9a" stroke-width=".9"/><path d="M0 3.0h6" stroke="#9a9a9a" stroke-width=".9"/><path d="M0 5.5h10" stroke="#9a9a9a" stroke-width=".9"/><path d="M0 8.0h6" stroke="#9a9a9a" stroke-width=".9"/></svg>
<svg style="position:absolute;left:284px;top:369px;" width="10" height="10" viewBox="0 0 10 10"><path d="M0 0.5h10" stroke="#9a9a9a" stroke-width=".9"/><path d="M2 3.0h6" stroke="#9a9a9a" stroke-width=".9"/><path d="M0 5.5h10" stroke="#9a9a9a" stroke-width=".9"/><path d="M2 8.0h6" stroke="#9a9a9a" stroke-width=".9"/></svg>
<svg style="position:absolute;left:301px;top:369px;" width="10" height="10" viewBox="0 0 10 10"><path d="M0 0.5h10" stroke="#9a9a9a" stroke-width=".9"/><path d="M4 3.0h6" stroke="#9a9a9a" stroke-width=".9"/><path d="M0 5.5h10" stroke="#9a9a9a" stroke-width=".9"/><path d="M4 8.0h6" stroke="#9a9a9a" stroke-width=".9"/></svg>
<svg style="position:absolute;left:318px;top:369px;" width="10" height="10" viewBox="0 0 10 10"><path d="M0 0.5h10" stroke="#9a9a9a" stroke-width=".9"/><path d="M4 3.0h6" stroke="#9a9a9a" stroke-width=".9"/><path d="M4 5.5h6" stroke="#9a9a9a" stroke-width=".9"/><path d="M0 8.0h10" stroke="#9a9a9a" stroke-width=".9"/><path d="M3 3.800h-3M1.300 2.600l-1.300 1.200 1.300 1.200" fill="none" stroke="#9a9a9a" stroke-width=".7"/></svg>
<svg style="position:absolute;left:335px;top:369px;" width="10" height="10" viewBox="0 0 10 10"><path d="M0 0.5h10" stroke="#9a9a9a" stroke-width=".9"/><path d="M4 3.0h6" stroke="#9a9a9a" stroke-width=".9"/><path d="M4 5.5h6" stroke="#9a9a9a" stroke-width=".9"/><path d="M0 8.0h10" stroke="#9a9a9a" stroke-width=".9"/><path d="M0 3.800h3M1.700 2.600l1.300 1.200-1.300 1.200" fill="none" stroke="#9a9a9a" stroke-width=".7"/></svg>
<svg style="position:absolute;left:357.5px;top:346.5px;" width="11" height="11" viewBox="0 0 11 11"><path d="M.5 2h3M.5 5h2M.5 8h3" stroke="#9a9a9a" stroke-width=".8"/><path d="M4.500 1.500c4-1 6 1.500 3.500 3.500h-3M6.300 3.600l-1.500 1.400 1.500 1.400" fill="none" stroke="#9a9a9a" stroke-width=".8"/><path d="M9.500 6.500c1 2-1 3.500-3 3h-1.500" fill="none" stroke="#9a9a9a" stroke-width=".8"/></svg>
<svg style="position:absolute;left:356px;top:368.5px;" width="12" height="11.5" viewBox="0 0 12 11.5"><rect x=".5" y=".5" width="11" height="10.500" fill="none" stroke="#8c8c8c" stroke-width=".9"/><path d="M.5 3h11M.5 8.500h11M6 .5v2.500M6 8.500v2.500" stroke="#8c8c8c" stroke-width=".8"/><path d="M2.300 5.800h7.400M3.600 4.600l-1.300 1.200 1.300 1.200M8.400 4.600l1.300 1.200-1.300 1.200" fill="none" stroke="#8c8c8c" stroke-width=".8"/></svg>
<svg style="position:absolute;left:371.3px;top:372.5px;" width="6" height="4" viewBox="0 0 6 4"><path d="M1 .9l2 1.900 2-1.900" fill="none" stroke="#888" stroke-width="1.250"/></svg>
<div style="position:absolute;left:392.5px;top:344px;width:98.5px;height:15.5px;background:#e1dfdd;box-sizing:border-box;border:1px solid #d6d4d2;"></div>
<div style="position:absolute;top:346.00px;height:12px;line-height:12px;font-size:9.5px;color:#a6a6a6;white-space:nowrap;left:394.60px;transform-origin:0 50%;transform:scaleX(0.8048);">General</div>
<svg style="position:absolute;left:483px;top:350.5px;" width="6" height="4" viewBox="0 0 6 4"><path d="M1 .9l2 1.900 2-1.900" fill="none" stroke="#aaa" stroke-width="1.250"/></svg>
<svg style="position:absolute;left:394px;top:369px;" width="13" height="11" viewBox="0 0 13 11"><rect x=".5" y=".5" width="11" height="7" fill="none" stroke="#888" stroke-width=".9"/><circle cx="6" cy="4" r="1.700" fill="none" stroke="#888" stroke-width=".8"/><ellipse cx="9.500" cy="6" rx="2.300" ry="1" fill="#f3f1f0" stroke="#888" stroke-width=".8"/><path d="M7.200 6v3.500c0 1.300 4.600 1.300 4.600 0v-3.500" fill="#f3f1f0" stroke="#888" stroke-width=".8"/></svg>
<svg style="position:absolute;left:409.4px;top:372.5px;" width="6" height="4" viewBox="0 0 6 4"><path d="M1 .9l2 1.900 2-1.900" fill="none" stroke="#aaa" stroke-width="1.250"/></svg>
<div style="position:absolute;top:365.50px;height:17px;line-height:17px;font-size:13px;color:#777;white-space:nowrap;left:421.80px;transform-origin:0 50%;transform:scaleX(0.9690);">%</div>
<div style="position:absolute;top:368.50px;height:10px;line-height:10px;font-size:7.5px;color:#999;white-space:nowrap;left:438.70px;transform-origin:0 50%;transform:scaleX(0.9030);">000</div>
<div style="position:absolute;top:367.00px;height:8px;line-height:8px;font-size:6.5px;color:#999;white-space:nowrap;left:466.00px;transform-origin:0 50%;">0</div>
<div style="position:absolute;top:373.50px;height:8px;line-height:8px;font-size:6.5px;color:#999;white-space:nowrap;left:463.50px;transform-origin:0 50%;">.00</div>
<svg style="position:absolute;left:460.5px;top:369.5px;" width="6" height="4" viewBox="0 0 6 4"><path d="M5.500 2h-5M2 .5l-1.500 1.500 1.500 1.500" fill="none" stroke="#999" stroke-width=".7"/></svg>
<div style="position:absolute;top:367.00px;height:8px;line-height:8px;font-size:6.5px;color:#999;white-space:nowrap;left:479.00px;transform-origin:0 50%;">.00</div>
<div style="position:absolute;top:373.50px;height:8px;line-height:8px;font-size:6.5px;color:#999;white-space:nowrap;left:484.00px;transform-origin:0 50%;">0</div>
<svg style="position:absolute;left:477px;top:376px;" width="6" height="4" viewBox="0 0 6 4"><path d="M.5 2h5M4 .5l1.500 1.500-1.500 1.500" fill="none" stroke="#999" stroke-width=".7"/></svg>
<svg style="position:absolute;left:504px;top:340.5px;" width="12" height="10" viewBox="0 0 12 10"><rect x=".5" y=".5" width="11" height="9" fill="none" stroke="#a0a0a0" stroke-width=".9"/><path d="M.5 3.500h11M.5 6.500h11M4 .5v9M8 .5v9" stroke="#a0a0a0" stroke-width=".7"/></svg>
<svg style="position:absolute;left:504px;top:357px;" width="12" height="10" viewBox="0 0 12 10"><rect x=".5" y=".5" width="11" height="9" fill="none" stroke="#a0a0a0" stroke-width=".9"/><path d="M.5 3.500h11M.5 6.500h11M4 .5v9M8 .5v9" stroke="#a0a0a0" stroke-width=".7"/></svg>
<svg style="position:absolute;left:504px;top:373.5px;" width="12" height="10" viewBox="0 0 12 10"><rect x=".5" y=".5" width="11" height="9" fill="none" stroke="#a0a0a0" stroke-width=".9"/><path d="M.5 3.500h11M.5 6.500h11M4 .5v9M8 .5v9" stroke="#a0a0a0" stroke-width=".7"/></svg>
<svg style="position:absolute;left:509px;top:361px;" width="7" height="6" viewBox="0 0 7 6"><path d="M.5 5.500l1-2.500 4-2.500 1 1.500-4 2.500z" fill="#c8c6c4" stroke="#999" stroke-width=".6"/></svg>
<svg style="position:absolute;left:509px;top:377px;" width="7" height="6" viewBox="0 0 7 6"><path d="M.5 5.500l1-2.500 4-2.500 1 1.500-4 2.500z" fill="#c8c6c4" stroke="#999" stroke-width=".6"/></svg>
<div style="position:absolute;top:339.60px;height:12px;line-height:12px;font-size:9.5px;color:#a6a6a6;white-space:nowrap;left:517.50px;transform-origin:0 50%;transform:scaleX(0.9095);">Formato condicional</div>
<svg style="position:absolute;left:597px;top:344.5px;" width="6" height="4" viewBox="0 0 6 4"><path d="M1 .9l2 1.900 2-1.900" fill="none" stroke="#b0b0b0" stroke-width="1.250"/></svg>
<div style="position:absolute;top:355.90px;height:12px;line-height:12px;font-size:9.5px;color:#a6a6a6;white-space:nowrap;left:517.50px;transform-origin:0 50%;transform:scaleX(0.9016);">Dar formato como tabla</div>
<svg style="position:absolute;left:608.6px;top:360.8px;" width="6" height="4" viewBox="0 0 6 4"><path d="M1 .9l2 1.900 2-1.900" fill="none" stroke="#b0b0b0" stroke-width="1.250"/></svg>
<div style="position:absolute;top:372.20px;height:12px;line-height:12px;font-size:9.5px;color:#a6a6a6;white-space:nowrap;left:517.50px;transform-origin:0 50%;transform:scaleX(0.8446);">Estilos de celda</div>
<svg style="position:absolute;left:575.8px;top:377px;" width="6" height="4" viewBox="0 0 6 4"><path d="M1 .9l2 1.900 2-1.900" fill="none" stroke="#b0b0b0" stroke-width="1.250"/></svg>
<svg style="position:absolute;left:632.5px;top:340.5px;" width="12" height="10" viewBox="0 0 12 10"><rect x=".5" y=".5" width="11" height="9" fill="none" stroke="#a0a0a0" stroke-width=".9"/><path d="M.5 3.500h11M.5 6.500h11M4 .5v9M8 .5v9" stroke="#a0a0a0" stroke-width=".7"/></svg>
<svg style="position:absolute;left:632.5px;top:357px;" width="12" height="10" viewBox="0 0 12 10"><rect x=".5" y=".5" width="11" height="9" fill="none" stroke="#a0a0a0" stroke-width=".9"/><path d="M.5 3.500h11M.5 6.500h11M4 .5v9M8 .5v9" stroke="#a0a0a0" stroke-width=".7"/></svg>
<svg style="position:absolute;left:632.5px;top:373px;" width="12" height="11" viewBox="0 0 12 11"><rect x=".5" y="1.500" width="11" height="9" fill="none" stroke="#333" stroke-width=".9"/><rect x="3.500" y="4.500" width="5" height="3.500" fill="#3a96dd"/><path d="M.5 4.500h11M.5 8h11M3.500 0v11M8.500 0v11" stroke="#333" stroke-width=".7"/></svg>
<div style="position:absolute;top:339.60px;height:12px;line-height:12px;font-size:9.5px;color:#a6a6a6;white-space:nowrap;left:646.40px;transform-origin:0 50%;transform:scaleX(0.8570);">Insertar</div>
<svg style="position:absolute;left:680.3px;top:344.5px;" width="6" height="4" viewBox="0 0 6 4"><path d="M1 .9l2 1.900 2-1.900" fill="none" stroke="#b8b8b8" stroke-width="1.250"/></svg>
<div style="position:absolute;top:355.90px;height:12px;line-height:12px;font-size:9.5px;color:#a6a6a6;white-space:nowrap;left:646.40px;transform-origin:0 50%;transform:scaleX(0.8859);">Eliminar</div>
<svg style="position:absolute;left:683.2px;top:360.8px;" width="6" height="4" viewBox="0 0 6 4"><path d="M1 .9l2 1.900 2-1.900" fill="none" stroke="#b8b8b8" stroke-width="1.250"/></svg>
<div style="position:absolute;top:372.20px;height:12px;line-height:12px;font-size:9.5px;color:#222;white-space:nowrap;left:646.40px;transform-origin:0 50%;transform:scaleX(0.8962);">Formato</div>
<svg style="position:absolute;left:680.5px;top:377px;" width="6" height="4" viewBox="0 0 6 4"><path d="M1 .9l2 1.900 2-1.900" fill="none" stroke="#444" stroke-width="1.250"/></svg>
<div style="position:absolute;top:336.80px;height:17px;line-height:17px;font-size:13px;color:#333;white-space:nowrap;left:707.70px;transform-origin:0 50%;transform:scaleX(1.0452);">Σ</div>
<svg style="position:absolute;left:721.6px;top:343.8px;" width="6" height="4" viewBox="0 0 6 4"><path d="M1 .9l2 1.900 2-1.900" fill="none" stroke="#444" stroke-width="1.250"/></svg>
<svg style="position:absolute;left:706px;top:356px;" width="12" height="10" viewBox="0 0 12 10"><rect x=".5" y=".5" width="11" height="9" fill="none" stroke="#aaa" stroke-width=".9"/><path d="M6 2.500v4.500M4.300 5.300l1.700 1.700 1.700-1.700" fill="none" stroke="#aaa" stroke-width=".8"/></svg>
<svg style="position:absolute;left:720px;top:359.5px;" width="6" height="4" viewBox="0 0 6 4"><path d="M1 .9l2 1.900 2-1.900" fill="none" stroke="#b8b8b8" stroke-width="1.250"/></svg>
<svg style="position:absolute;left:706px;top:372.5px;" width="12.5" height="11" viewBox="0 0 12.5 11"><path d="M6.500 1l5 4-5.500 5h-2.500l-2.500-2.500z" fill="#e9d3ee" stroke="#a84fb8" stroke-width=".9"/><path d="M3.200 4.300l4.300 4.200" stroke="#a84fb8" stroke-width=".9"/></svg>
<svg style="position:absolute;left:720px;top:376.5px;" width="6" height="4" viewBox="0 0 6 4"><path d="M1 .9l2 1.900 2-1.900" fill="none" stroke="#444" stroke-width="1.250"/></svg>
<div style="position:absolute;top:340.00px;height:13px;line-height:13px;font-size:10px;color:#b0b0b0;white-space:nowrap;left:739.50px;transform-origin:0 50%;">A</div>
<div style="position:absolute;top:350.00px;height:13px;line-height:13px;font-size:10px;color:#b0b0b0;white-space:nowrap;left:739.50px;transform-origin:0 50%;">Z</div>
<svg style="position:absolute;left:748.7px;top:344.5px;" width="13" height="13" viewBox="0 0 13 13"><path d="M.8 1h11.400l-4.200 4.800v5l-3-1.300v-3.700z" fill="none" stroke="#b0b0b0" stroke-width="1"/></svg>
<div style="position:absolute;top:363.70px;height:12px;line-height:12px;font-size:9.5px;color:#a6a6a6;white-space:nowrap;left:732.40px;transform-origin:0 50%;transform:scaleX(0.8594);">Ordenar y</div>
<div style="position:absolute;top:375.00px;height:12px;line-height:12px;font-size:9.5px;color:#a6a6a6;white-space:nowrap;left:736.90px;transform-origin:0 50%;transform:scaleX(1.0279);">filtrar</div>
<svg style="position:absolute;left:760px;top:380px;" width="6" height="4" viewBox="0 0 6 4"><path d="M1 .9l2 1.900 2-1.900" fill="none" stroke="#b8b8b8" stroke-width="1.250"/></svg>
<svg style="position:absolute;left:786px;top:340px;" width="22" height="22" viewBox="0 0 22 22"><circle cx="13.500" cy="7.800" r="6.600" fill="none" stroke="#333" stroke-width="1.100"/><path d="M9 12.500l-8 8.500" stroke="#333" stroke-width="1.200"/></svg>
<div style="position:absolute;top:363.70px;height:12px;line-height:12px;font-size:9.5px;color:#222;white-space:nowrap;left:781.60px;transform-origin:0 50%;transform:scaleX(0.8523);">Buscar y</div>
<div style="position:absolute;top:375.00px;height:12px;line-height:12px;font-size:9.5px;color:#222;white-space:nowrap;left:772.40px;transform-origin:0 50%;transform:scaleX(0.8657);">seleccionar</div>
<svg style="position:absolute;left:816px;top:380px;" width="6" height="4" viewBox="0 0 6 4"><path d="M1 .9l2 1.900 2-1.900" fill="none" stroke="#444" stroke-width="1.250"/></svg>
<svg style="position:absolute;left:840px;top:339px;" width="24" height="23" viewBox="0 0 24 23"><rect x=".5" y=".5" width="22.500" height="22" fill="#e4e2e0" stroke="#b5b5b5" stroke-width="1"/><path d="M.5 4h22.500M.5 17h22.500M8 17v5.500M15.500 17v5.500" stroke="#b5b5b5" stroke-width=".9"/><circle cx="11.500" cy="10" r="6" fill="#f3f1f0" stroke="#aaa" stroke-width="1.100"/><path d="M9 12.500v-3.500h1.700v-2h1.800v1h1.700v4.500z" fill="#b0b0b0"/><path d="M16 14.500l6.500 7" stroke="#aaa" stroke-width="1.200"/></svg>
<div style="position:absolute;top:363.70px;height:12px;line-height:12px;font-size:9.5px;color:#a6a6a6;white-space:nowrap;left:836.90px;transform-origin:0 50%;transform:scaleX(0.8449);">Analizar</div>
<div style="position:absolute;top:375.00px;height:12px;line-height:12px;font-size:9.5px;color:#a6a6a6;white-space:nowrap;left:841.80px;transform-origin:0 50%;transform:scaleX(0.8606);">datos</div>
<svg style="position:absolute;left:904px;top:339px;" width="22" height="23" viewBox="0 0 22 23"><path d="M1.500 4.500h9l3.500 3.500v14h-12.500z" fill="#f3f1f0" stroke="#b5b5b5" stroke-width="1"/><path d="M13.500 1l5.500 4-2 2.500 1 1-8 8-3.500-3 7-9z" fill="#e1dfdd" stroke="#b5b5b5" stroke-width="1"/><path d="M6.500 10l5 4.500" stroke="#b5b5b5" stroke-width="1.500"/></svg>
<div style="position:absolute;top:363.70px;height:12px;line-height:12px;font-size:9.5px;color:#a6a6a6;white-space:nowrap;left:881.50px;transform-origin:0 50%;transform:scaleX(0.8940);">Confidencialidad</div>
<svg style="position:absolute;left:909.4px;top:379.5px;" width="6" height="4" viewBox="0 0 6 4"><path d="M1 .9l2 1.900 2-1.900" fill="none" stroke="#b8b8b8" stroke-width="1.250"/></svg>
<div style="position:absolute;left:27px;top:402.5px;width:963px;height:34px;background:#e6e6e6;background:linear-gradient(#d9d9d9 0,#e6e6e6 5px);"></div>
<div style="position:absolute;left:31.5px;top:411px;width:70.8px;height:17.5px;background:#fff;box-sizing:border-box;border:1px solid #d6d6d6;"></div>
<div style="position:absolute;top:414.30px;height:12px;line-height:12px;font-size:9.5px;color:#444;white-space:nowrap;left:35.90px;transform-origin:0 50%;transform:scaleX(0.8607);">C15</div>
<svg style="position:absolute;left:92.5px;top:418.5px;" width="5" height="4" viewBox="0 0 5 4"><path d="M.3 .5h4.400l-2.200 2.800z" fill="#666"/></svg>
<div style="position:absolute;left:113px;top:416.5px;width:1px;height:1px;background:#999;"></div>
<div style="position:absolute;left:113px;top:419.5px;width:1px;height:1px;background:#999;"></div>
<div style="position:absolute;left:113px;top:422.5px;width:1px;height:1px;background:#999;"></div>
<div style="position:absolute;left:124.5px;top:411px;width:77px;height:17.5px;background:#fff;box-sizing:border-box;border:1px solid #d6d6d6;"></div>
<svg style="position:absolute;left:133px;top:416.5px;" width="8" height="8" viewBox="0 0 8 8"><path d="M.8 .8l6.400 6.400M7.200 .8L.8 7.200" stroke="#666" stroke-width="1.100"/></svg>
<svg style="position:absolute;left:157.5px;top:416.5px;" width="10" height="8" viewBox="0 0 10 8"><path d="M.8 4.500l2.800 2.700 5.400-6.400" fill="none" stroke="#666" stroke-width="1.200"/></svg>
<div style="position:absolute;top:413.00px;height:14px;line-height:14px;font-size:10.5px;color:#555;white-space:nowrap;font-style:italic;left:185.30px;transform-origin:0 50%;font-family:'Liberation Serif',serif;">f</div>
<div style="position:absolute;top:417.00px;height:10px;line-height:10px;font-size:7.5px;color:#555;white-space:nowrap;font-style:italic;left:188.30px;transform-origin:0 50%;font-family:'Liberation Serif',serif;">x</div>
<div style="position:absolute;left:204px;top:411px;width:781.5px;height:17.5px;background:#fff;box-sizing:border-box;border:1px solid #d6d6d6;"></div>
<div style="position:absolute;top:414.30px;height:12px;line-height:12px;font-size:9.5px;color:#444;white-space:nowrap;left:212.10px;transform-origin:0 50%;transform:scaleX(1.0267);">Son sinónimo</div>
<svg style="position:absolute;left:977.3px;top:418.5px;" width="6" height="4" viewBox="0 0 6 4"><path d="M1 .9l2 1.900 2-1.900" fill="none" stroke="#555" stroke-width="1.250"/></svg>
<div style="position:absolute;left:27px;top:436.5px;width:963px;height:13px;background:#e6e6e6;"></div>
<div style="position:absolute;left:228.5px;top:436.5px;width:299px;height:13px;background:#d2d2d2;box-sizing:border-box;border-bottom:1.500px solid #217346;"></div>
<svg style="position:absolute;left:34.5px;top:439px;" width="8.5" height="8.5" viewBox="0 0 8.5 8.5"><path d="M8.200 .3v7.900h-7.900z" fill="#b5b5b5"/></svg>
<div style="position:absolute;top:437.00px;height:12px;line-height:12px;font-size:9px;color:#444;white-space:nowrap;left:52.25px;transform-origin:50% 50%;">A</div>
<div style="position:absolute;left:65.0px;top:438px;width:1px;height:11px;background:#b8b8b8;"></div>
<div style="position:absolute;top:437.00px;height:12px;line-height:12px;font-size:9px;color:#444;white-space:nowrap;left:144.00px;transform-origin:50% 50%;">B</div>
<div style="position:absolute;left:228.0px;top:438px;width:1px;height:11px;background:#b8b8b8;"></div>
<div style="position:absolute;top:437.00px;height:12px;line-height:12px;font-size:9px;color:#217346;white-space:nowrap;left:374.75px;transform-origin:50% 50%;">C</div>
<div style="position:absolute;left:527.0px;top:438px;width:1px;height:11px;background:#b8b8b8;"></div>
<div style="position:absolute;top:437.00px;height:12px;line-height:12px;font-size:9px;color:#444;white-space:nowrap;left:590.70px;transform-origin:50% 50%;">D</div>
<div style="position:absolute;left:659.9px;top:438px;width:1px;height:11px;background:#b8b8b8;"></div>
<div style="position:absolute;top:437.00px;height:12px;line-height:12px;font-size:9px;color:#444;white-space:nowrap;left:687.85px;transform-origin:50% 50%;">G</div>
<div style="position:absolute;left:721.8px;top:438px;width:1px;height:11px;background:#b8b8b8;"></div>
<div style="position:absolute;top:437.00px;height:12px;line-height:12px;font-size:9px;color:#444;white-space:nowrap;left:757.45px;transform-origin:50% 50%;">H</div>
<div style="position:absolute;left:798.6px;top:438px;width:1px;height:11px;background:#b8b8b8;"></div>
<div style="position:absolute;top:437.00px;height:12px;line-height:12px;font-size:9px;color:#444;white-space:nowrap;left:841.90px;transform-origin:50% 50%;">I</div>
<div style="position:absolute;left:886.7px;top:438px;width:1px;height:11px;background:#b8b8b8;"></div>
<div style="position:absolute;top:437.00px;height:12px;line-height:12px;font-size:9px;color:#444;white-space:nowrap;left:956.25px;transform-origin:50% 50%;">J</div>
<div style="position:absolute;left:44.5px;top:438px;width:1px;height:11px;background:#b8b8b8;"></div>
<div style="position:absolute;left:658px;top:438px;width:1px;height:11px;background:#b8b8b8;"></div>
<div style="position:absolute;left:45px;top:449.5px;width:930px;height:325px;background:#fff;"></div>
<div style="position:absolute;left:27px;top:449.5px;width:18px;height:325px;background:#e6e6e6;"></div>
<div style="position:absolute;left:45px;top:449.5px;width:929.7px;height:40.5px;background:#743da5;"></div>
<div style="position:absolute;top:478.30px;height:12px;line-height:12px;font-size:9px;color:#444;white-space:nowrap;left:31.90px;transform-origin:0 50%;transform:scaleX(0.8590);">10</div>
<div style="position:absolute;left:27px;top:489.5px;width:18px;height:1px;background:#bdbdbd;"></div>
<div style="position:absolute;top:506.00px;height:12px;line-height:12px;font-size:9px;color:#444;white-space:nowrap;left:31.90px;transform-origin:0 50%;transform:scaleX(0.9205);">11</div>
<div style="position:absolute;left:27px;top:518.0px;width:18px;height:1px;background:#bdbdbd;"></div>
<div style="position:absolute;left:45px;top:518.0px;width:930px;height:1px;background:#e0e0e0;"></div>
<div style="position:absolute;top:506.00px;height:12px;line-height:12px;font-size:9.5px;color:#222;white-space:nowrap;left:58.52px;transform-origin:100% 50%;-webkit-text-stroke:.15px #222;">1</div>
<div style="position:absolute;top:534.50px;height:12px;line-height:12px;font-size:9px;color:#444;white-space:nowrap;left:31.90px;transform-origin:0 50%;transform:scaleX(0.8590);">12</div>
<div style="position:absolute;left:27px;top:545.7px;width:18px;height:1px;background:#bdbdbd;"></div>
<div style="position:absolute;left:45px;top:545.7px;width:930px;height:1px;background:#e0e0e0;"></div>
<div style="position:absolute;top:534.50px;height:12px;line-height:12px;font-size:9.5px;color:#222;white-space:nowrap;left:58.52px;transform-origin:100% 50%;-webkit-text-stroke:.15px #222;">2</div>
<div style="position:absolute;top:562.60px;height:12px;line-height:12px;font-size:9px;color:#444;white-space:nowrap;left:31.90px;transform-origin:0 50%;transform:scaleX(0.8590);">13</div>
<div style="position:absolute;left:27px;top:573.8px;width:18px;height:1px;background:#bdbdbd;"></div>
<div style="position:absolute;left:45px;top:573.8px;width:930px;height:1px;background:#e0e0e0;"></div>
<div style="position:absolute;top:562.60px;height:12px;line-height:12px;font-size:9.5px;color:#222;white-space:nowrap;left:58.52px;transform-origin:100% 50%;-webkit-text-stroke:.15px #222;">3</div>
<div style="position:absolute;top:590.70px;height:12px;line-height:12px;font-size:9px;color:#444;white-space:nowrap;left:31.90px;transform-origin:0 50%;transform:scaleX(0.8590);">14</div>
<div style="position:absolute;left:27px;top:601.9px;width:18px;height:1px;background:#bdbdbd;"></div>
<div style="position:absolute;left:45px;top:601.9px;width:930px;height:1px;background:#e0e0e0;"></div>
<div style="position:absolute;top:590.70px;height:12px;line-height:12px;font-size:9.5px;color:#222;white-space:nowrap;left:58.52px;transform-origin:100% 50%;-webkit-text-stroke:.15px #222;">4</div>
<div style="position:absolute;left:27px;top:602.4px;width:18px;height:15.0px;background:#d2d2d2;box-sizing:border-box;border-right:1.500px solid #217346;"></div>
<div style="position:absolute;top:605.40px;height:12px;line-height:12px;font-size:9px;color:#217346;white-space:nowrap;left:31.90px;transform-origin:0 50%;transform:scaleX(0.8590);">15</div>
<div style="position:absolute;left:27px;top:616.9px;width:18px;height:1px;background:#bdbdbd;"></div>
<div style="position:absolute;left:45px;top:616.9px;width:930px;height:1px;background:#e0e0e0;"></div>
<div style="position:absolute;top:605.40px;height:12px;line-height:12px;font-size:9.5px;color:#222;white-space:nowrap;left:58.52px;transform-origin:100% 50%;-webkit-text-stroke:.15px #222;">5</div>
<div style="position:absolute;top:633.90px;height:12px;line-height:12px;font-size:9px;color:#444;white-space:nowrap;left:31.90px;transform-origin:0 50%;transform:scaleX(0.8590);">16</div>
<div style="position:absolute;left:27px;top:644.7px;width:18px;height:1px;background:#bdbdbd;"></div>
<div style="position:absolute;left:45px;top:644.7px;width:930px;height:1px;background:#e0e0e0;"></div>
<div style="position:absolute;top:633.90px;height:12px;line-height:12px;font-size:9.5px;color:#222;white-space:nowrap;left:58.52px;transform-origin:100% 50%;-webkit-text-stroke:.15px #222;">6</div>
<div style="position:absolute;top:675.90px;height:12px;line-height:12px;font-size:9px;color:#444;white-space:nowrap;left:31.90px;transform-origin:0 50%;transform:scaleX(0.8590);">17</div>
<div style="position:absolute;left:27px;top:687.1px;width:18px;height:1px;background:#bdbdbd;"></div>
<div style="position:absolute;left:45px;top:687.1px;width:930px;height:1px;background:#e0e0e0;"></div>
<div style="position:absolute;top:675.90px;height:12px;line-height:12px;font-size:9.5px;color:#222;white-space:nowrap;left:58.52px;transform-origin:100% 50%;-webkit-text-stroke:.15px #222;">7</div>
<div style="position:absolute;top:718.30px;height:12px;line-height:12px;font-size:9px;color:#444;white-space:nowrap;left:31.90px;transform-origin:0 50%;transform:scaleX(0.8590);">18</div>
<div style="position:absolute;left:27px;top:729.8px;width:18px;height:1px;background:#bdbdbd;"></div>
<div style="position:absolute;left:45px;top:729.8px;width:930px;height:1px;background:#e0e0e0;"></div>
<div style="position:absolute;top:718.30px;height:12px;line-height:12px;font-size:9.5px;color:#222;white-space:nowrap;left:58.52px;transform-origin:100% 50%;-webkit-text-stroke:.15px #222;">8</div>
<div style="position:absolute;top:760.60px;height:12px;line-height:12px;font-size:9px;color:#444;white-space:nowrap;left:31.90px;transform-origin:0 50%;transform:scaleX(0.8590);">19</div>
<div style="position:absolute;left:27px;top:771.9px;width:18px;height:1px;background:#bdbdbd;"></div>
<div style="position:absolute;left:45px;top:771.9px;width:930px;height:1px;background:#e0e0e0;"></div>
<div style="position:absolute;top:760.60px;height:12px;line-height:12px;font-size:9.5px;color:#222;white-space:nowrap;left:58.52px;transform-origin:100% 50%;-webkit-text-stroke:.15px #222;">9</div>
<div style="position:absolute;left:44.5px;top:449.5px;width:1px;height:325px;background:#bdbdbd;"></div>
<div style="position:absolute;left:65.0px;top:490px;width:1px;height:284.5px;background:#e0e0e0;"></div>
<div style="position:absolute;left:65.0px;top:449.5px;width:1px;height:40.5px;background:#5a2584;"></div>
<div style="position:absolute;left:228.0px;top:490px;width:1px;height:284.5px;background:#e0e0e0;"></div>
<div style="position:absolute;left:228.0px;top:449.5px;width:1px;height:40.5px;background:#5a2584;"></div>
<div style="position:absolute;left:527.0px;top:490px;width:1px;height:284.5px;background:#e0e0e0;"></div>
<div style="position:absolute;left:527.0px;top:449.5px;width:1px;height:40.5px;background:#5a2584;"></div>
<div style="position:absolute;left:659.9px;top:490px;width:1px;height:284.5px;background:#e0e0e0;"></div>
<div style="position:absolute;left:659.9px;top:449.5px;width:1px;height:40.5px;background:#5a2584;"></div>
<div style="position:absolute;left:721.8px;top:490px;width:1px;height:284.5px;background:#e0e0e0;"></div>
<div style="position:absolute;left:721.8px;top:449.5px;width:1px;height:40.5px;background:#5a2584;"></div>
<div style="position:absolute;left:798.6px;top:490px;width:1px;height:284.5px;background:#e0e0e0;"></div>
<div style="position:absolute;left:798.6px;top:449.5px;width:1px;height:40.5px;background:#5a2584;"></div>
<div style="position:absolute;left:886.7px;top:490px;width:1px;height:284.5px;background:#e0e0e0;"></div>
<div style="position:absolute;left:886.7px;top:449.5px;width:1px;height:40.5px;background:#5a2584;"></div>
<div style="position:absolute;top:464.10px;height:12px;line-height:12px;font-size:9px;color:#fff;white-space:nowrap;font-weight:700;left:47.50px;transform-origin:0 50%;transform:scaleX(1.1394);">N º</div>
<div style="position:absolute;top:464.10px;height:12px;line-height:12px;font-size:9px;color:#fff;white-space:nowrap;font-weight:700;left:108.70px;transform-origin:0 50%;transform:scaleX(1.0102);">Serie Documental</div>
<div style="position:absolute;top:464.10px;height:12px;line-height:12px;font-size:9px;color:#fff;white-space:nowrap;font-weight:700;left:352.30px;transform-origin:0 50%;">Descripción</div>
<div style="position:absolute;top:464.10px;height:12px;line-height:12px;font-size:9px;color:#fff;white-space:nowrap;font-weight:700;left:557.00px;transform-origin:0 50%;transform:scaleX(1.0162);">Tipo documental</div>
<div style="position:absolute;top:457.00px;height:12px;line-height:12px;font-size:9px;color:#fff;white-space:nowrap;font-weight:700;left:675.40px;transform-origin:0 50%;transform:scaleX(1.0459);">Unidad</div>
<div style="position:absolute;top:471.20px;height:12px;line-height:12px;font-size:9px;color:#fff;white-space:nowrap;font-weight:700;left:667.20px;transform-origin:0 50%;transform:scaleX(0.9915);">Productora</div>
<div style="position:absolute;top:457.00px;height:12px;line-height:12px;font-size:9px;color:#fff;white-space:nowrap;font-weight:700;left:734.30px;transform-origin:0 50%;">Sistemas de</div>
<div style="position:absolute;top:471.20px;height:12px;line-height:12px;font-size:9px;color:#fff;white-space:nowrap;font-weight:700;left:733.10px;transform-origin:0 50%;transform:scaleX(1.0407);">información</div>
<div style="position:absolute;top:464.10px;height:12px;line-height:12px;font-size:9px;color:#fff;white-space:nowrap;font-weight:700;left:828.70px;transform-origin:0 50%;transform:scaleX(0.9119);">Acceso</div>
<div style="position:absolute;left:930px;top:455px;width:44.7px;height:30px;overflow:hidden;"><div style="position:absolute;top:9.10px;height:12px;line-height:12px;font-size:9.5px;color:#fff;white-space:nowrap;left:1.80px;transform-origin:0 50%;">Observaciones</div></div>
<div style="position:absolute;top:498.50px;height:13px;line-height:13px;font-size:10px;color:#222;white-space:nowrap;left:109.80px;transform-origin:0 50%;transform:scaleX(0.9651);-webkit-text-stroke:.2px #222;">Correspondencia</div>
<div style="position:absolute;top:491.70px;height:13px;line-height:13px;font-size:10px;color:#222;white-space:nowrap;left:234.60px;transform-origin:0 50%;transform:scaleX(0.9819);-webkit-text-stroke:.2px #222;">Totalmente electrónico y consecutivo general de planificación y se</div>
<div style="position:absolute;top:505.20px;height:13px;line-height:13px;font-size:10px;color:#222;white-space:nowrap;left:348.60px;transform-origin:0 50%;transform:scaleX(0.9793);-webkit-text-stroke:.2px #222;">lleva por año.</div>
<div style="position:absolute;top:519.80px;height:13px;line-height:13px;font-size:10px;color:#222;white-space:nowrap;left:88.00px;transform-origin:0 50%;transform:scaleX(0.9668);-webkit-text-stroke:.2px #222;">Consecutivos o registros de</div>
<div style="position:absolute;top:533.70px;height:13px;line-height:13px;font-size:10px;color:#222;white-space:nowrap;left:72.30px;transform-origin:0 50%;transform:scaleX(0.9867);-webkit-text-stroke:.2px #222;">correspondencia interna y externa</div>
<div style="position:absolute;top:526.20px;height:13px;line-height:13px;font-size:10px;color:#222;white-space:nowrap;left:329.00px;transform-origin:0 50%;transform:scaleX(0.9363);-webkit-text-stroke:.2px #222;">Si, brindado por la UGD</div>
<div style="position:absolute;top:547.50px;height:13px;line-height:13px;font-size:10px;color:#222;white-space:nowrap;left:99.30px;transform-origin:0 50%;transform:scaleX(0.9462);-webkit-text-stroke:.2px #222;">Estudios técnicos para</div>
<div style="position:absolute;top:561.80px;height:13px;line-height:13px;font-size:10px;color:#222;white-space:nowrap;left:111.00px;transform-origin:0 50%;transform:scaleX(0.9585);-webkit-text-stroke:.2px #222;">reorganizaciones</div>
<div style="position:absolute;top:555.10px;height:13px;line-height:13px;font-size:10px;color:#222;white-space:nowrap;left:310.30px;transform-origin:0 50%;transform:scaleX(0.9608);-webkit-text-stroke:.2px #222;">Si correspondende a la Unidad.</div>
<div style="position:absolute;top:576.40px;height:13px;line-height:13px;font-size:10px;color:#222;white-space:nowrap;left:74.60px;transform-origin:0 50%;transform:scaleX(0.9807);-webkit-text-stroke:.2px #222;">Planes Operativos Institucionales</div>
<div style="position:absolute;top:589.90px;height:13px;line-height:13px;font-size:10px;color:#222;white-space:nowrap;left:135.70px;transform-origin:0 50%;transform:scaleX(0.9877);-webkit-text-stroke:.2px #222;">(Poi),</div>
<div style="position:absolute;top:583.20px;height:13px;line-height:13px;font-size:10px;color:#222;white-space:nowrap;left:325.30px;transform-origin:0 50%;transform:scaleX(0.9736);-webkit-text-stroke:.2px #222;">Se realizan anualmente.</div>
<div style="position:absolute;top:604.50px;height:13px;line-height:13px;font-size:10px;color:#222;white-space:nowrap;left:76.50px;transform-origin:0 50%;transform:scaleX(0.9565);-webkit-text-stroke:.2px #222;">Planes Anuales Operativos (Pao)</div>
<div style="position:absolute;top:604.50px;height:13px;line-height:13px;font-size:10px;color:#222;white-space:nowrap;left:348.60px;transform-origin:0 50%;transform:scaleX(0.9704);-webkit-text-stroke:.2px #222;">Son sinónimo</div>
<div style="position:absolute;top:618.40px;height:13px;line-height:13px;font-size:10px;color:#222;white-space:nowrap;left:72.30px;transform-origin:0 50%;transform:scaleX(0.9681);-webkit-text-stroke:.2px #222;">Planes Estratégicos Institucionales</div>
<div style="position:absolute;top:632.70px;height:13px;line-height:13px;font-size:10px;color:#222;white-space:nowrap;left:136.80px;transform-origin:0 50%;transform:scaleX(0.9756);-webkit-text-stroke:.2px #222;">(Pei)</div>
<div style="position:absolute;top:646.60px;height:13px;line-height:13px;font-size:10px;color:#222;white-space:nowrap;left:79.80px;transform-origin:0 50%;transform:scaleX(0.9666);-webkit-text-stroke:.2px #222;">Proyectos de presupuesto; que</div>
<div style="position:absolute;top:660.50px;height:13px;line-height:13px;font-size:10px;color:#222;white-space:nowrap;left:69.30px;transform-origin:0 50%;transform:scaleX(0.9701);-webkit-text-stroke:.2px #222;">contengan la aprobación del órgano</div>
<div style="position:absolute;top:674.70px;height:13px;line-height:13px;font-size:10px;color:#222;white-space:nowrap;left:93.00px;transform-origin:0 50%;transform:scaleX(1.0043);-webkit-text-stroke:.2px #222;">superior de la institución</div>
<div style="position:absolute;top:689.00px;height:13px;line-height:13px;font-size:10px;color:#222;white-space:nowrap;left:71.20px;transform-origin:0 50%;transform:scaleX(0.9557);-webkit-text-stroke:.2px #222;">Planes estratégicos especiales: Por</div>
<div style="position:absolute;top:703.20px;height:13px;line-height:13px;font-size:10px;color:#222;white-space:nowrap;left:72.00px;transform-origin:0 50%;transform:scaleX(0.9618);-webkit-text-stroke:.2px #222;">ejemplo, los Planes de Tecnologías</div>
<div style="position:absolute;top:717.50px;height:13px;line-height:13px;font-size:10px;color:#222;white-space:nowrap;left:107.90px;transform-origin:0 50%;transform:scaleX(0.9863);-webkit-text-stroke:.2px #222;">de la Información.</div>
<div style="position:absolute;top:731.30px;height:13px;line-height:13px;font-size:10px;color:#222;white-space:nowrap;left:81.70px;transform-origin:0 50%;transform:scaleX(0.9603);-webkit-text-stroke:.2px #222;">Planes e informes del Sistema</div>
<div style="position:absolute;top:745.60px;height:13px;line-height:13px;font-size:10px;color:#222;white-space:nowrap;left:72.30px;transform-origin:0 50%;transform:scaleX(0.9495);-webkit-text-stroke:.2px #222;">Específico de Valoración de Riesgo</div>
<div style="position:absolute;top:759.40px;height:13px;line-height:13px;font-size:10px;color:#222;white-space:nowrap;left:133.40px;transform-origin:0 50%;transform:scaleX(0.9543);-webkit-text-stroke:.2px #222;">(Sevri)</div>
<div style="position:absolute;left:227.5px;top:601.5px;width:301px;height:16.5px;box-sizing:border-box;border:1.500px solid #217346;"></div>
<div style="position:absolute;left:526.5px;top:615.5px;width:3.5px;height:3.5px;background:#217346;outline:1px solid #fff;"></div>
<svg style="position:absolute;left:298.2px;top:612.7px;" width="18" height="22" viewBox="0 0 18 22"><path d="M1 5.500h9M5.500 1v9" stroke="#222" stroke-width="1"/><path d="M5.500 .2l-1.300 1.600h2.600zM.2 5.500l1.600-1.300v2.600zM10.800 5.500l-1.600-1.300v2.600z" fill="#222"/><path d="M6.500 7v11l2.600-2.300 1.800 4 1.600-.7-1.800-3.900h3.500z" fill="#fff" stroke="#222" stroke-width=".8"/></svg>
<div style="position:absolute;left:974.7px;top:436.5px;width:15.3px;height:338.5px;background:#e6e6e6;"></div>
<div style="position:absolute;left:976px;top:437.5px;width:11.5px;height:10px;background:#fff;box-sizing:border-box;border:1px solid #c6c6c6;"></div>
<svg style="position:absolute;left:979px;top:441px;" width="6" height="4" viewBox="0 0 6 4"><path d="M.3 3.500h5.400l-2.700-3z" fill="#555"/></svg>
<div style="position:absolute;left:976px;top:766px;width:11.5px;height:10px;background:#fff;box-sizing:border-box;border:1px solid #c6c6c6;"></div>
<svg style="position:absolute;left:979px;top:769.5px;" width="6" height="4" viewBox="0 0 6 4"><path d="M.3 .5h5.400l-2.700 3z" fill="#555"/></svg>
<div style="position:absolute;left:976px;top:497px;width:11.5px;height:118px;background:#fff;box-sizing:border-box;border:1px solid #d6d6d6;"></div>
<div style="position:absolute;left:27px;top:775px;width:963px;height:20.5px;background:#e6e6e6;border-top:1px solid #cfcfcf;box-sizing:border-box;"></div>
<svg style="position:absolute;left:46px;top:782px;" width="4" height="7" viewBox="0 0 4 7"><path d="M3.500 .3v6.400l-3.200-3.200z" fill="#217346"/></svg>
<svg style="position:absolute;left:66.5px;top:782px;" width="4" height="7" viewBox="0 0 4 7"><path d="M.5 .3v6.400l3.200-3.200z" fill="#c2c2c2"/></svg>
<div style="position:absolute;top:776.30px;height:14px;line-height:14px;font-size:11px;color:#333;white-space:nowrap;font-weight:700;left:84.30px;transform-origin:0 50%;transform:scaleX(0.7526);">...</div>
<div style="position:absolute;left:98px;top:779px;width:1px;height:13px;background:#c4c4c4;"></div>
<div style="position:absolute;left:205.5px;top:779px;width:1px;height:13px;background:#c4c4c4;"></div>
<div style="position:absolute;left:298.5px;top:779px;width:1px;height:13px;background:#c4c4c4;"></div>
<div style="position:absolute;top:779.00px;height:12px;line-height:12px;font-size:9.5px;color:#555;white-space:nowrap;left:109.80px;transform-origin:0 50%;transform:scaleX(0.9655);">DirecciónInformatica</div>
<div style="position:absolute;top:779.00px;height:12px;line-height:12px;font-size:9.5px;color:#555;white-space:nowrap;left:216.60px;transform-origin:0 50%;transform:scaleX(0.9374);">UnidadFinanciera</div>
<div style="position:absolute;top:779.00px;height:12px;line-height:12px;font-size:9.5px;color:#555;white-space:nowrap;left:308.50px;transform-origin:0 50%;transform:scaleX(0.9639);">DirecciónNacional</div>
<div style="position:absolute;left:394.3px;top:775px;width:71px;height:19px;background:#fff;box-sizing:border-box;border-bottom:2px solid #217346;"></div>
<div style="position:absolute;top:779.00px;height:12px;line-height:12px;font-size:9.5px;color:#217346;white-space:nowrap;font-weight:700;left:402.20px;transform-origin:0 50%;transform:scaleX(0.9454);">Planificación</div>
<svg style="position:absolute;left:488px;top:779px;" width="12" height="12" viewBox="0 0 12 12"><circle cx="6" cy="6" r="5.200" fill="none" stroke="#777" stroke-width=".9"/><path d="M3.200 6h5.600M6 3.200v5.600" stroke="#777" stroke-width=".9"/></svg>
<div style="position:absolute;left:604.5px;top:782px;width:1px;height:1px;background:#888;"></div>
<div style="position:absolute;left:604.5px;top:785px;width:1px;height:1px;background:#888;"></div>
<div style="position:absolute;left:604.5px;top:788px;width:1px;height:1px;background:#888;"></div>
<div style="position:absolute;left:617px;top:780.5px;width:357.5px;height:9.5px;background:#cfcfcf;"></div>
<div style="position:absolute;left:617px;top:780.5px;width:9.5px;height:9.5px;background:#fff;box-sizing:border-box;border:1px solid #c0c0c0;"></div>
<svg style="position:absolute;left:619.5px;top:782.5px;" width="4" height="6" viewBox="0 0 4 6"><path d="M3.500 .3v5.400l-3-2.700z" fill="#444"/></svg>
<div style="position:absolute;left:965px;top:780.5px;width:9.5px;height:9.5px;background:#fff;box-sizing:border-box;border:1px solid #c0c0c0;"></div>
<svg style="position:absolute;left:968px;top:782.5px;" width="4" height="6" viewBox="0 0 4 6"><path d="M.5 .3v5.400l3-2.700z" fill="#444"/></svg>
<div style="position:absolute;left:627.5px;top:780.5px;width:207px;height:9.5px;background:#fff;box-sizing:border-box;border:1px solid #d0d0d0;"></div>
<div style="position:absolute;left:27px;top:795.5px;width:963px;height:15.5px;background:#f3f2f1;"></div>
<div style="position:absolute;top:797.50px;height:11px;line-height:11px;font-size:8.5px;color:#555;white-space:nowrap;left:33.00px;transform-origin:0 50%;">Modificar</div>
<svg style="position:absolute;left:81.5px;top:797.5px;" width="10" height="10" viewBox="0 0 10 10"><circle cx="4.500" cy="4.500" r="3.800" fill="none" stroke="#555" stroke-width=".8"/><path d="M4.500 2v2.800l2 1.200M5.500 6.500l4 3M9.500 6.500l-4 3" fill="none" stroke="#555" stroke-width=".8"/></svg>
<div style="position:absolute;top:797.50px;height:11px;line-height:11px;font-size:8.5px;color:#555;white-space:nowrap;left:94.80px;transform-origin:0 50%;transform:scaleX(0.9393);">Accesibilidad: es necesario investigar</div>
<svg style="position:absolute;left:784.5px;top:798px;" width="11" height="10" viewBox="0 0 11 10"><rect x=".5" y=".5" width="10" height="9" fill="none" stroke="#999" stroke-width=".8"/><path d="M.5 3.500h10M.5 6.500h10M4 .5v9M7.500 .5v9" stroke="#999" stroke-width=".6"/></svg>
<svg style="position:absolute;left:813px;top:798px;" width="11" height="10" viewBox="0 0 11 10"><rect x=".5" y=".5" width="10" height="9" fill="none" stroke="#999" stroke-width=".8"/><rect x="3" y="2.500" width="5" height="5" fill="none" stroke="#999" stroke-width=".7"/></svg>
<svg style="position:absolute;left:841px;top:798px;" width="11" height="10" viewBox="0 0 11 10"><rect x=".5" y=".5" width="10" height="9" fill="none" stroke="#999" stroke-width=".8"/><path d="M4 .5v5.500h6.500" fill="none" stroke="#999" stroke-width=".7"/></svg>
<div style="position:absolute;left:865.5px;top:803px;width:5px;height:1px;background:#999;"></div>
<div style="position:absolute;left:874.8px;top:803px;width:69.5px;height:1px;background:#b8b8b8;"></div>
<div style="position:absolute;left:909px;top:800.5px;width:1px;height:6px;background:#999;"></div>
<svg style="position:absolute;left:947px;top:800px;" width="7" height="7" viewBox="0 0 7 7"><path d="M0 3.500h7M3.500 0v7" stroke="#888" stroke-width=".9"/></svg>
<div style="position:absolute;top:797.50px;height:11px;line-height:11px;font-size:8.5px;color:#aaa;white-space:nowrap;left:963.60px;transform-origin:0 50%;transform:scaleX(0.8257);">100 %</div>
<div style="position:absolute;left:27px;top:811px;width:963px;height:19px;background:#141211;"></div>
<svg style="position:absolute;left:34.5px;top:815.5px;" width="12" height="11" viewBox="0 0 12 11"><path d="M0 1.600l5-.7v4.300h-5zM5.700 .8l6.300-.8v5.200h-6.300zM0 5.900h5v4.300l-5-.7zM5.700 5.900h6.300v5.100l-6.300-.8z" fill="#fff"/></svg>
<svg style="position:absolute;left:60px;top:815.5px;" width="12" height="12" viewBox="0 0 12 12"><circle cx="7.300" cy="4.300" r="3.500" fill="none" stroke="#fff" stroke-width="1"/><path d="M4.800 6.800l-4.300 4.500" stroke="#fff" stroke-width="1.100"/></svg>
<svg style="position:absolute;left:84.5px;top:815.5px;" width="14" height="11" viewBox="0 0 14 11"><rect x="1.500" y="2.500" width="7" height="6.500" fill="none" stroke="#fff" stroke-width="1"/><path d="M1 .5h8M1 10.500h8M11.500 2.500v6.500M11.500 .3v1M11.500 10v1" stroke="#fff" stroke-width="1"/></svg>
<svg style="position:absolute;left:112px;top:815px;" width="14" height="12" viewBox="0 0 14 12"><path d="M.5 2h5l1.200 1.500h6.800v8h-13z" fill="#f5c443"/><rect x="1.500" y="5" width="11" height="6.500" fill="#f8d775"/><rect x="4" y="7.500" width="6" height="4" fill="#3a96dd"/></svg>
<svg style="position:absolute;left:139px;top:815px;" width="12" height="12" viewBox="0 0 12 12"><circle cx="6" cy="6" r="5.800" fill="#e34133"/><path d="M6 6L.4 4.500A5.800 5.800 0 0 0 5 11.700z" fill="#2da94f"/><path d="M6 6l5.600-1.500A5.800 5.800 0 0 1 5 11.700z" fill="#fcc934"/><circle cx="6" cy="6" r="2.700" fill="#fff"/><circle cx="6" cy="6" r="2" fill="#3e82f1"/></svg>
<svg style="position:absolute;left:165.5px;top:815.5px;" width="11" height="11" viewBox="0 0 11 11"><rect width="11" height="11" fill="#f7cf3a"/><path d="M7 11l4-4v4z" fill="#c79a14"/></svg>
<svg style="position:absolute;left:190.5px;top:815px;" width="13" height="12" viewBox="0 0 13 12"><rect x="3" y="1.500" width="9.500" height="9" rx="1.500" fill="#7b83eb"/><circle cx="10" cy="1.800" r="1.600" fill="#7b83eb"/><rect x="0" y="3" width="7.500" height="7.500" rx="1" fill="#4b53bc"/><path d="M1.800 5h4M3.800 5v4" stroke="#fff" stroke-width="1"/></svg>
<div style="position:absolute;left:210px;top:811px;width:24.5px;height:19px;background:#3b3b3b;"></div>
<svg style="position:absolute;left:216px;top:815px;" width="13" height="12" viewBox="0 0 13 12"><rect x="3" y=".5" width="10" height="11" rx="1" fill="#21a366"/><rect x="0" y="2.500" width="7.500" height="7.500" rx="1" fill="#107c41"/><path d="M2 4.300l3.500 4M5.500 4.300L2 8.300" stroke="#fff" stroke-width="1"/></svg>
<svg style="position:absolute;left:242.5px;top:815px;" width="13" height="12" viewBox="0 0 13 12"><rect x="3" y=".5" width="10" height="11" rx="1" fill="#41a5ee"/><rect x="0" y="2.500" width="7.500" height="7.500" rx="1" fill="#185abd"/><path d="M1.500 4.300l1.200 4 1.100-3 1.100 3 1.200-4" fill="none" stroke="#fff" stroke-width=".8"/></svg>
<svg style="position:absolute;left:269.5px;top:815px;" width="13" height="12" viewBox="0 0 13 12"><ellipse cx="6" cy="6" rx="5.800" ry="4.800" fill="#e8e1d5"/><circle cx="3.500" cy="5" r="1.200" fill="#e34133"/><circle cx="6.300" cy="3.500" r="1.200" fill="#3e82f1"/><circle cx="8.800" cy="5.500" r="1.200" fill="#f7cf3a"/><path d="M7 9l5-5 1 1-5 5z" fill="#c0432f"/></svg>
<svg style="position:absolute;left:754.5px;top:813.5px;" width="16" height="15" viewBox="0 0 16 15"><path d="M4 9.500a3 3 0 0 1 .3-6 4 4 0 0 1 7.600.8 2.700 2.700 0 0 1-.2 5.300z" fill="#d9e6f5"/><path d="M5 11l-.8 2M8 11l-.8 2.500M11 11l-.8 2" stroke="#58a6e8" stroke-width="1.100" stroke-linecap="round"/></svg>
<div style="position:absolute;top:814.80px;height:14px;line-height:14px;font-size:10.5px;color:#fff;white-space:nowrap;left:777.40px;transform-origin:0 50%;transform:scaleX(0.8439);">21°C</div>
<div style="position:absolute;top:814.80px;height:14px;line-height:14px;font-size:10.5px;color:#fff;white-space:nowrap;left:803.60px;transform-origin:0 50%;transform:scaleX(0.9003);">Lluvia</div>
<svg style="position:absolute;left:839px;top:818px;" width="9" height="6" viewBox="0 0 9 6"><path d="M.7 5l3.800-3.800 3.800 3.800" fill="none" stroke="#fff" stroke-width="1"/></svg>
<svg style="position:absolute;left:861.5px;top:816.5px;" width="10" height="10" viewBox="0 0 10 10"><path d="M.5 9.500A9 9 0 0 1 9.500 .5" fill="none" stroke="#6a6a6a" stroke-width=".9"/><path d="M3.500 9.500A6 6 0 0 1 9.500 3.500" fill="none" stroke="#8a8a8a" stroke-width=".9"/><path d="M6.300 9.500A3.200 3.200 0 0 1 9.500 6.300" fill="none" stroke="#d0d0d0" stroke-width="1"/><circle cx="8.800" cy="8.800" r="1" fill="#e0e0e0"/></svg>
<svg style="position:absolute;left:881.5px;top:815.5px;" width="12" height="11" viewBox="0 0 12 11"><path d="M.5 3.800h2.200l2.800-2.800v9l-2.800-2.800h-2.200z" fill="none" stroke="#fff" stroke-width=".9"/><path d="M7.300 3.500c1 1 1 3 0 4M9 2c1.800 1.800 1.800 5.200 0 7" fill="none" stroke="#fff" stroke-width=".8"/></svg>
<div style="position:absolute;top:816.10px;height:11px;line-height:11px;font-size:8.5px;color:#fff;white-space:nowrap;left:905.50px;transform-origin:0 50%;transform:scaleX(0.7290);">ESP</div>
<div style="position:absolute;top:816.10px;height:11px;line-height:11px;font-size:8.5px;color:#fff;white-space:nowrap;left:929.20px;transform-origin:0 50%;transform:scaleX(0.8791);">13:45</div>
<svg style="position:absolute;left:960px;top:815.5px;" width="12" height="11" viewBox="0 0 12 11"><path d="M.5 .5h11v8h-3v2l-2.500-2h-5.500z" fill="#fff"/><path d="M2.500 3h7M2.500 5.500h5" stroke="#0e0e0e" stroke-width=".9"/></svg>
<div style="position:absolute;left:987px;top:811px;width:1px;height:19px;background:#555;"></div>
<div style="position:absolute;left:27px;top:798px;width:99.5px;height:23.5px;background:rgba(60,60,60,.56);border-radius:0 4px 0 0;"></div>
<div style="position:absolute;top:803.20px;height:16px;line-height:16px;font-size:12px;color:#fff;white-space:nowrap;font-weight:700;left:23.00px;transform-origin:0 50%;transform:scaleX(0.9090);text-shadow:0 0 2px rgba(0,0,0,.6);">consultora externa</div>
<div style="position:absolute;left:1013px;top:104px;width:1px;height:731px;background:#141414;"></div>
<div style="position:absolute;left:1014px;top:104px;width:320px;height:731px;background:#1f1f1f;"></div>
<div style="position:absolute;top:139.50px;height:21px;line-height:21px;font-size:16px;color:#fff;white-space:nowrap;font-weight:700;left:1034.30px;transform-origin:0 50%;transform:scaleX(0.9912);">Participantes</div>
<svg style="position:absolute;left:1256px;top:150px;" width="18" height="8" viewBox="0 0 18 8"><circle cx="3.300" cy="4.200" r="1.050" fill="#fff"/><circle cx="9" cy="4.200" r="1.050" fill="#fff"/><circle cx="14.700" cy="4.200" r="1.050" fill="#fff"/></svg>
<svg style="position:absolute;left:1289px;top:146px;" width="16" height="16" viewBox="0 0 16 16"><path d="M2.200 2.200l11.700 11.700M13.900 2.200L2.200 13.900" stroke="#fff" stroke-width="1.100" stroke-linecap="round"/></svg>
<div style="position:absolute;left:1034px;top:186.5px;width:280px;height:31px;background:#2d2d2d;border-radius:3px;box-sizing:border-box;border-bottom:2px solid #8f93e8;"></div>
<div style="position:absolute;left:1046px;top:192.5px;width:1px;height:17.5px;background:#fff;"></div>
<div style="position:absolute;top:192.60px;height:18px;line-height:18px;font-size:14px;color:#c8c8c8;white-space:nowrap;left:1047.50px;transform-origin:0 50%;transform:scaleX(0.9910);">Invita a alguien o marca un número</div>
<svg style="position:absolute;left:1287px;top:193px;" width="18" height="18" viewBox="0 0 18 18"><circle cx="7.600" cy="7.800" r="5" fill="none" stroke="#fff" stroke-width="1.300"/><path d="M11.300 11.500l4.600 4.600" stroke="#fff" stroke-width="1.500" stroke-linecap="round"/></svg>
<div style="position:absolute;left:1034px;top:228px;width:280px;height:31.5px;background:#292929;box-sizing:border-box;border:1px solid #5c5c5c;border-radius:2px;"></div>
<svg style="position:absolute;left:1096px;top:235.5px;" width="17" height="17" viewBox="0 0 17 17"><circle cx="3.300" cy="8.500" r="1.900" fill="none" stroke="#fff" stroke-width="1"/><circle cx="12.600" cy="3.300" r="1.900" fill="none" stroke="#fff" stroke-width="1"/><circle cx="12.600" cy="13.600" r="1.900" fill="none" stroke="#fff" stroke-width="1"/><path d="M5 7.600l5.900-3.300M5 9.400l5.900 3.300" stroke="#fff" stroke-width="1"/></svg>
<div style="position:absolute;top:235.20px;height:18px;line-height:18px;font-size:14px;color:#fff;white-space:nowrap;font-weight:700;left:1122.20px;transform-origin:0 50%;transform:scaleX(0.9550);">Compartir invitación</div>
<svg style="position:absolute;left:1021px;top:301px;" width="8" height="6" viewBox="0 0 8 6"><path d="M.8 1h6.400l-3.200 4z" fill="#9a9a9a"/></svg>
<div style="position:absolute;top:296.80px;height:16px;line-height:16px;font-size:12px;color:#e6e6e6;white-space:nowrap;left:1035.30px;transform-origin:0 50%;transform:scaleX(0.9612);">En esta reunión (5)</div>
<div style="position:absolute;left:1210.5px;top:292.5px;width:111.5px;height:23.5px;background:#292929;box-sizing:border-box;border:1px solid #5c5c5c;border-radius:2px;"></div>
<div style="position:absolute;top:297.20px;height:16px;line-height:16px;font-size:12px;color:#fff;white-space:nowrap;font-weight:700;left:1221.30px;transform-origin:0 50%;transform:scaleX(0.9362);">Silenciar a todos</div>
<svg style="position:absolute;left:1035px;top:327.8px;" width="32" height="32" viewBox="0 0 32 32"><defs><clipPath id="pa0c"><circle cx="16" cy="16" r="16"/></clipPath><filter id="pa0b" x="-30%" y="-30%" width="160%" height="160%"><feGaussianBlur stdDeviation="1.44"/></filter><filter id="pa0b2" x="-30%" y="-30%" width="160%" height="160%"><feGaussianBlur stdDeviation="0.72"/></filter></defs><g clip-path="url(#pa0c)"><rect width="32" height="32" fill="#eef7fb"/><g filter="url(#pa0b)"><ellipse cx="20.80" cy="1.92" rx="6.08" ry="2.24" fill="#8fcdee"/><ellipse cx="4.80" cy="8.00" rx="4.80" ry="4.80" fill="#cfe7f4"/><ellipse cx="27.20" cy="17.92" rx="6.72" ry="5.44" fill="#86c8ee"/><ellipse cx="21.60" cy="20.00" rx="4.80" ry="2.56" fill="#a8d8f2"/><ellipse cx="24.80" cy="13.60" rx="4.80" ry="2.24" fill="#ffffff"/><ellipse cx="30.40" cy="11.20" rx="3.20" ry="4.80" fill="#9ad2f0"/></g><g filter="url(#pa0b2)"><path d="M0.32 24.00L8.00 22.72L12.48 25.60L12.80 32L0 32Z" fill="#5b6f90"/><path d="M0 23.20L4.80 24.00L7.20 32L0 32Z" fill="#2c2f3a"/><ellipse cx="5.76" cy="17.60" rx="5.28" ry="5.44" fill="#3b3540"/><ellipse cx="7.20" cy="19.52" rx="3.04" ry="3.84" fill="#c4a08f"/><path d="M9.60 16.00C11.52 19.20 10.56 22.40 11.20 24.80L9.28 24.00Z" fill="#3b3540"/></g></g></svg>
<svg style="position:absolute;left:1055.2px;top:348.6px;" width="13" height="13" viewBox="0 0 13 13"><circle cx="6.500" cy="6.500" r="6.500" fill="#1f1f1f"/><circle cx="6.500" cy="6.500" r="4.700" fill="#c4314b"/></svg>
<div style="position:absolute;top:328.10px;height:18px;line-height:18px;font-size:14px;color:#fff;white-space:nowrap;left:1075.10px;transform-origin:0 50%;transform:scaleX(0.9687);-webkit-text-stroke:.25px #fff;">Alexandra Vargas Viquez</div>
<div style="position:absolute;top:346.00px;height:16px;line-height:16px;font-size:12px;color:#adadad;white-space:nowrap;left:1075.10px;transform-origin:0 50%;">Organizador</div>
<svg style="position:absolute;left:1296px;top:335.8px;" width="16" height="16" viewBox="0 0 16 16"><path d="M8 1.600a2.600 2.600 0 0 1 2.600 2.600v4.300a2.600 2.600 0 0 1-5.200 0v-4.300a2.600 2.600 0 0 1 2.600-2.600z" fill="none" stroke="#e6e6e6" stroke-width="1.100"/><path d="M3.300 8.300a4.700 4.700 0 0 0 9.400 0M8 13v2.300" fill="none" stroke="#e6e6e6" stroke-width="1.100" stroke-linecap="round"/><path d="M1.200 1.200l13.600 13.600" stroke="#1f1f1f" stroke-width="2.600"/><path d="M1.200 1.200l13.600 13.600" stroke="#e6e6e6" stroke-width="1.100" stroke-linecap="round"/></svg>
<div style="position:absolute;left:1035px;top:377.8px;width:32px;height:32px;background:#d3deef;border-radius:50%;"></div>
<div style="position:absolute;top:386.10px;height:16px;line-height:16px;font-size:12px;color:#2f4d80;white-space:nowrap;font-weight:700;left:1043.30px;transform-origin:0 50%;transform:scaleX(0.8938);">CE</div>
<svg style="position:absolute;left:1055.2px;top:398.40000000000003px;" width="13" height="13" viewBox="0 0 13 13"><circle cx="6.500" cy="6.500" r="6.500" fill="#1f1f1f"/><circle cx="6.500" cy="6.500" r="4.300" fill="#2b2b2b" stroke="#a0a0a0" stroke-width="1"/><path d="M4.800 4.800l3.400 3.400M8.200 4.800L4.800 8.200" stroke="#a0a0a0" stroke-width=".9"/></svg>
<div style="position:absolute;top:378.10px;height:18px;line-height:18px;font-size:14px;color:#fff;white-space:nowrap;left:1075.10px;transform-origin:0 50%;transform:scaleX(0.9915);-webkit-text-stroke:.25px #fff;">consultora externa</div>
<div style="position:absolute;top:396.00px;height:16px;line-height:16px;font-size:12px;color:#adadad;white-space:nowrap;left:1075.10px;transform-origin:0 50%;transform:scaleX(0.9854);">Externo a tu organización</div>
<svg style="position:absolute;left:1296px;top:385.5px;" width="16" height="16.5" viewBox="0 0 16 16.5"><path d="M8 1.200a2.900 2.900 0 0 1 2.900 2.900v4.300a2.900 2.900 0 0 1-5.800 0v-4.300a2.900 2.900 0 0 1 2.900-2.900z" fill="#fff"/><path d="M3.300 8.400a4.700 4.700 0 0 0 9.400 0M8 13.100v2.300" fill="none" stroke="#fff" stroke-width="1.200" stroke-linecap="round"/></svg>
<div style="position:absolute;left:1035px;top:427.8px;width:32px;height:32px;background:#d3e6dc;border-radius:50%;"></div>
<div style="position:absolute;top:436.10px;height:16px;line-height:16px;font-size:12px;color:#1e5c40;white-space:nowrap;font-weight:700;left:1043.60px;transform-origin:0 50%;transform:scaleX(0.8638);">ER</div>
<svg style="position:absolute;left:1055.2px;top:448.6px;" width="13" height="13" viewBox="0 0 13 13"><circle cx="6.500" cy="6.500" r="6.500" fill="#1f1f1f"/><circle cx="6.500" cy="6.500" r="4.700" fill="#c4314b"/></svg>
<div style="position:absolute;top:435.30px;height:18px;line-height:18px;font-size:14px;color:#fff;white-space:nowrap;left:1075.10px;transform-origin:0 50%;transform:scaleX(0.9568);-webkit-text-stroke:.25px #fff;">Elizabeth Herrera Rojas</div>
<svg style="position:absolute;left:1296px;top:435.8px;" width="16" height="16" viewBox="0 0 16 16"><path d="M8 1.600a2.600 2.600 0 0 1 2.600 2.600v4.300a2.600 2.600 0 0 1-5.200 0v-4.300a2.600 2.600 0 0 1 2.600-2.600z" fill="none" stroke="#e6e6e6" stroke-width="1.100"/><path d="M3.300 8.300a4.700 4.700 0 0 0 9.400 0M8 13v2.300" fill="none" stroke="#e6e6e6" stroke-width="1.100" stroke-linecap="round"/><path d="M1.200 1.200l13.600 13.600" stroke="#1f1f1f" stroke-width="2.600"/><path d="M1.200 1.200l13.600 13.600" stroke="#e6e6e6" stroke-width="1.100" stroke-linecap="round"/></svg>
<svg style="position:absolute;left:1035px;top:477.8px;" width="32" height="32" viewBox="0 0 32 32"><defs><clipPath id="pa3c"><circle cx="16" cy="16" r="16"/></clipPath><radialGradient id="pa3g" cx=".5" cy=".55" r=".62"><stop offset="0" stop-color="#f0f0f0"/><stop offset=".7" stop-color="#e4e4e4"/><stop offset="1" stop-color="#c4c4c4"/></radialGradient><filter id="pa3b" x="-30%" y="-30%" width="160%" height="160%"><feGaussianBlur stdDeviation="0.56"/></filter></defs><g clip-path="url(#pa3c)"><rect width="32" height="32" fill="url(#pa3g)"/><g filter="url(#pa3b)"><path d="M3.20 32C4.00 24.80 8.00 22.72 12.80 21.76L20.00 20.80C25.60 21.12 29.60 24.00 31.20 32Z" fill="#3e3e3e"/><path d="M8.80 23.20L12.80 20.80L20.48 20.80L24.00 24.80L15.20 29.60L8.80 28.00Z" fill="#777"/><path d="M12.00 17.60H19.52L20.80 22.72L15.20 24.80L11.20 22.72Z" fill="#868686"/><ellipse cx="14.88" cy="6.72" rx="6.56" ry="5.76" fill="#262626"/><ellipse cx="14.40" cy="12.48" rx="5.92" ry="7.52" fill="#9c9c9c"/><ellipse cx="17.92" cy="13.12" rx="2.56" ry="6.08" fill="#7c7c7c"/><ellipse cx="12.80" cy="9.92" rx="3.20" ry="2.56" fill="#adadad"/><ellipse cx="11.52" cy="10.72" rx="1.28" ry="0.56" fill="#3c3c3c"/><ellipse cx="16.80" cy="10.72" rx="1.28" ry="0.56" fill="#3c3c3c"/><ellipse cx="13.92" cy="15.84" rx="2.40" ry="1.20" fill="#555"/><ellipse cx="13.92" cy="15.68" rx="1.92" ry="0.64" fill="#f4f4f4"/><circle cx="20.00" cy="16.32" r="0.56" fill="#f4f4f4"/></g></g></svg>
<svg style="position:absolute;left:1055.2px;top:498.6px;" width="13" height="13" viewBox="0 0 13 13"><circle cx="6.500" cy="6.500" r="6.500" fill="#1f1f1f"/><circle cx="6.500" cy="6.500" r="4.700" fill="#c4314b"/></svg>
<div style="position:absolute;top:485.30px;height:18px;line-height:18px;font-size:14px;color:#fff;white-space:nowrap;left:1075.10px;transform-origin:0 50%;transform:scaleX(0.9717);-webkit-text-stroke:.25px #fff;">Laura Morúa Calvo</div>
<svg style="position:absolute;left:1296px;top:485.8px;" width="16" height="16" viewBox="0 0 16 16"><path d="M8 1.600a2.600 2.600 0 0 1 2.600 2.600v4.300a2.600 2.600 0 0 1-5.200 0v-4.300a2.600 2.600 0 0 1 2.600-2.600z" fill="none" stroke="#e6e6e6" stroke-width="1.100"/><path d="M3.300 8.300a4.700 4.700 0 0 0 9.400 0M8 13v2.300" fill="none" stroke="#e6e6e6" stroke-width="1.100" stroke-linecap="round"/><path d="M1.200 1.200l13.600 13.600" stroke="#1f1f1f" stroke-width="2.600"/><path d="M1.200 1.200l13.600 13.600" stroke="#e6e6e6" stroke-width="1.100" stroke-linecap="round"/></svg>
<svg style="position:absolute;left:1035px;top:527.8px;" width="32" height="32" viewBox="0 0 32 32"><defs><clipPath id="pa4c"><circle cx="16" cy="16" r="16"/></clipPath><filter id="pa4b" x="-30%" y="-30%" width="160%" height="160%"><feGaussianBlur stdDeviation="0.64"/></filter></defs><g clip-path="url(#pa4c)"><rect width="32" height="32" fill="#c4c7c1"/><g filter="url(#pa4b)"><rect x="0" y="0" width="8.00" height="32" fill="#a9ada5"/><rect x="8.00" y="0" width="6.40" height="32" fill="#cfd2cc"/><rect x="14.40" y="0" width="1.92" height="19.20" fill="#eef0ee"/><rect x="16.80" y="0" width="9.92" height="20.80" fill="#dfe2e0"/><rect x="26.40" y="0" width="6.40" height="32" fill="#b9bcb5"/><rect x="29.44" y="8.00" width="1.60" height="14.40" fill="#eceeea"/><path d="M1.92 32C2.40 24.80 7.20 22.40 11.20 20.00L20.80 20.80C25.60 21.60 29.60 24.00 30.40 32Z" fill="#1d1c22"/><ellipse cx="4.80" cy="25.92" rx="2.72" ry="3.20" fill="#b0485a"/><ellipse cx="24.80" cy="25.92" rx="3.20" ry="4.48" fill="#b5566a"/><ellipse cx="22.72" cy="29.12" rx="1.92" ry="1.60" fill="#7f8ec0"/><ellipse cx="15.68" cy="10.88" rx="5.60" ry="5.76" fill="#2a2422"/><ellipse cx="15.68" cy="14.72" rx="5.12" ry="7.36" fill="#b58470"/><ellipse cx="15.68" cy="24.00" rx="3.20" ry="3.52" fill="#a87764"/><rect x="10.56" y="12.48" width="4.64" height="3.52" rx="0.80" fill="#8f6e5e" stroke="#2e2622" stroke-width="0.80"/><rect x="16.32" y="12.48" width="4.64" height="3.52" rx="0.80" fill="#8f6e5e" stroke="#2e2622" stroke-width="0.80"/><ellipse cx="15.68" cy="19.20" rx="1.60" ry="0.48" fill="#8c4a48"/></g></g></svg>
<svg style="position:absolute;left:1055.2px;top:548.5999999999999px;" width="13" height="13" viewBox="0 0 13 13"><circle cx="6.500" cy="6.500" r="6.500" fill="#1f1f1f"/><circle cx="6.500" cy="6.500" r="4.700" fill="#c4314b"/></svg>
<div style="position:absolute;top:535.30px;height:18px;line-height:18px;font-size:14px;color:#fff;white-space:nowrap;left:1075.10px;transform-origin:0 50%;transform:scaleX(0.9730);-webkit-text-stroke:.25px #fff;">Merceditas Lizano Vega</div>
<svg style="position:absolute;left:1296px;top:535.5px;" width="16" height="16.5" viewBox="0 0 16 16.5"><path d="M8 1.200a2.900 2.900 0 0 1 2.900 2.900v4.300a2.900 2.900 0 0 1-5.800 0v-4.300a2.900 2.900 0 0 1 2.900-2.900z" fill="#fff"/><path d="M3.300 8.400a4.700 4.700 0 0 0 9.400 0M8 13.100v2.300" fill="none" stroke="#fff" stroke-width="1.200" stroke-linecap="round"/></svg>
<div style="position:absolute;left:1333px;top:4px;width:1px;height:831px;background:#080808;"></div>
<div style="position:absolute;left:3px;top:4px;width:1px;height:831px;background:#060606;"></div>
</body></html>
